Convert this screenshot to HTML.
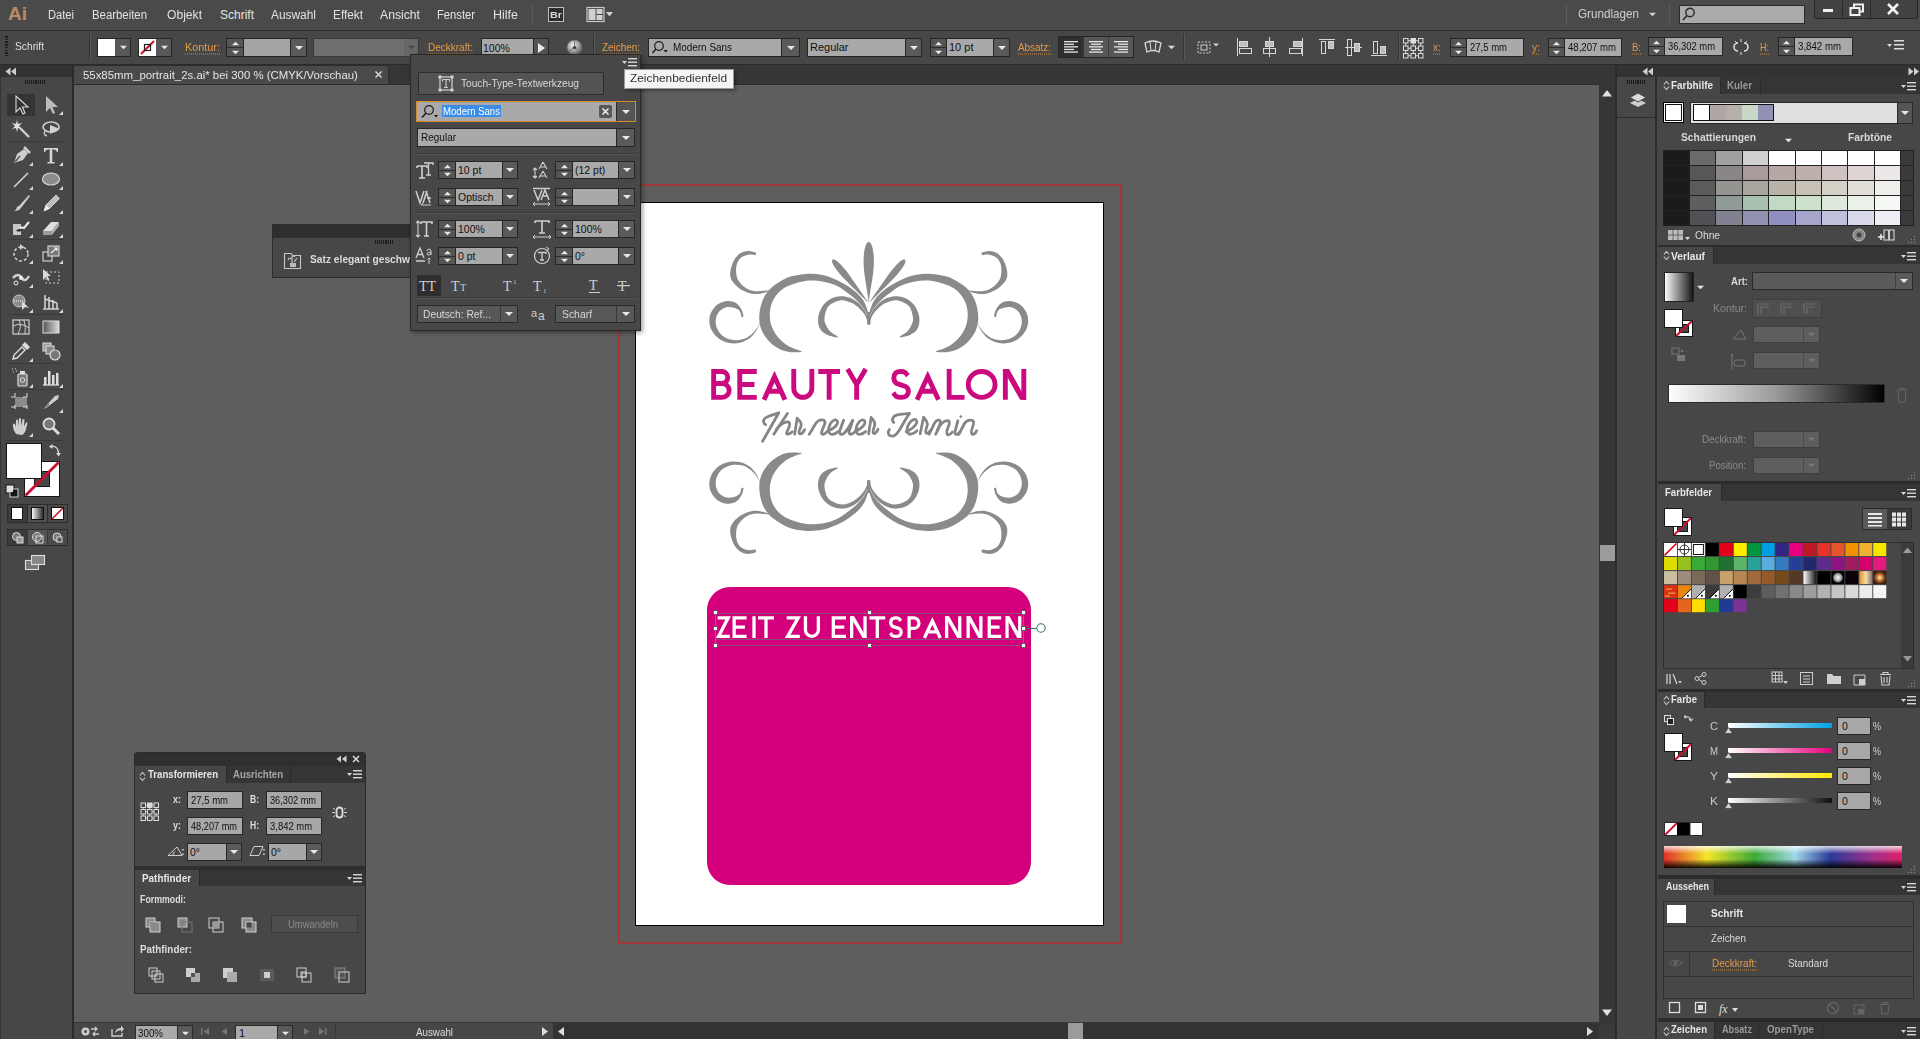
<!DOCTYPE html><html><head><meta charset="utf-8"><title>Illustrator</title><style>
*{margin:0;padding:0;box-sizing:border-box}
html,body{width:1920px;height:1039px;overflow:hidden;background:#484848;font-family:"Liberation Sans",sans-serif;color:#d8d8d8}
.a{position:absolute;display:block}
.t{position:absolute;white-space:nowrap}
</style></head><body><div class="a" style="left:0px;top:0px;width:1920px;height:30px;background:#4a4a4a;"></div><div class="a" style="left:0px;top:30px;width:1920px;height:1px;background:#2b2b2b;"></div><div class="a" style="left:0px;top:31px;width:1920px;height:33px;background:#474747;"></div><div class="a" style="left:0px;top:64px;width:1920px;height:1px;background:#2b2b2b;"></div><div class="a" style="left:0px;top:65px;width:72px;height:12px;background:#333333;"></div><div class="a" style="left:0px;top:77px;width:72px;height:962px;background:#474747;"></div><div class="a" style="left:0px;top:77px;width:1px;height:962px;background:#353535;"></div><div class="a" style="left:72px;top:65px;width:2px;height:974px;background:#2b2b2b;"></div><div class="a" style="left:74px;top:65px;width:1525px;height:20px;background:#363636;"></div><div class="a" style="left:74px;top:85px;width:1525px;height:937px;background:#5e5e5e;"></div><div class="a" style="left:74px;top:1022px;width:1525px;height:17px;background:#474747;"></div><div class="a" style="left:1599px;top:65px;width:16px;height:974px;background:#363636;"></div><div class="a" style="left:1615px;top:65px;width:2px;height:974px;background:#2b2b2b;"></div><div class="a" style="left:1617px;top:65px;width:38px;height:12px;background:#333333;"></div><div class="a" style="left:1617px;top:77px;width:38px;height:962px;background:#474747;"></div><div class="a" style="left:1655px;top:77px;width:2px;height:962px;background:#2b2b2b;"></div><div class="a" style="left:1655px;top:65px;width:2px;height:12px;background:#333333;"></div><div class="a" style="left:1657px;top:65px;width:263px;height:12px;background:#333333;"></div><div class="a" style="left:1657px;top:77px;width:263px;height:962px;background:#474747;"></div><div class="t" style="left:8.0px;top:3.92px;font-size:19px;line-height:19px;color:#c08a60;font-weight:bold;transform:scaleX(1.000);transform-origin:0 0;">Ai</div><div class="t" style="left:48.0px;top:8.84px;font-size:12px;line-height:12px;color:#e2e2e2;transform:scaleX(0.928);transform-origin:0 0;">Datei</div><div class="t" style="left:92.0px;top:8.84px;font-size:12px;line-height:12px;color:#e2e2e2;transform:scaleX(0.948);transform-origin:0 0;">Bearbeiten</div><div class="t" style="left:167.0px;top:8.84px;font-size:12px;line-height:12px;color:#e2e2e2;transform:scaleX(1.009);transform-origin:0 0;">Objekt</div><div class="t" style="left:220.0px;top:8.84px;font-size:12px;line-height:12px;color:#e2e2e2;transform:scaleX(1.000);transform-origin:0 0;">Schrift</div><div class="t" style="left:271.0px;top:8.84px;font-size:12px;line-height:12px;color:#e2e2e2;transform:scaleX(0.992);transform-origin:0 0;">Auswahl</div><div class="t" style="left:333.0px;top:8.84px;font-size:12px;line-height:12px;color:#e2e2e2;transform:scaleX(0.985);transform-origin:0 0;">Effekt</div><div class="t" style="left:380.0px;top:8.84px;font-size:12px;line-height:12px;color:#e2e2e2;transform:scaleX(1.016);transform-origin:0 0;">Ansicht</div><div class="t" style="left:437.0px;top:8.84px;font-size:12px;line-height:12px;color:#e2e2e2;transform:scaleX(0.934);transform-origin:0 0;">Fenster</div><div class="t" style="left:493.0px;top:8.84px;font-size:12px;line-height:12px;color:#e2e2e2;transform:scaleX(1.041);transform-origin:0 0;">Hilfe</div><div class="a" style="left:532px;top:5px;width:1px;height:20px;background:#5a5a5a;"></div><div class="a" style="left:548px;top:7px;width:16px;height:15px;background:#2e2e2e;border:1px solid #bdbdbd"></div><div class="t" style="left:550.0px;top:10.46px;font-size:9.5px;line-height:9.5px;color:#d8d8d8;font-weight:bold;transform:scaleX(1.137);transform-origin:0 0;">Br</div><svg class="a" style="left:586px;top:6px;" width="28" height="17" viewBox="0 0 28 17"><rect x="1" y="1.5" width="17" height="14" fill="none" stroke="#c8c8c8" stroke-width="1.2"/><rect x="2.5" y="3" width="7" height="11" fill="#d0d0d0"/><rect x="10.5" y="3" width="6" height="5" fill="#d0d0d0"/><rect x="10.5" y="9" width="6" height="5" fill="#d0d0d0"/><path d="M20 6 L27 6 L23.5 10.5 Z" fill="#d0d0d0"/></svg><div class="a" style="left:1566px;top:4px;width:1px;height:22px;background:#5a5a5a;"></div><div class="t" style="left:1578.0px;top:7.84px;font-size:12px;line-height:12px;color:#cfcfcf;transform:scaleX(0.973);transform-origin:0 0;">Grundlagen</div><svg class="a" style="left:1648.5px;top:10.5px;" width="7.0" height="7.0" viewBox="0 0 7.0 7.0"><path d="M0 1.75 L7.0 1.75 L3.5 5.25 Z" fill="#d0d0d0"/></svg><div class="a" style="left:1669px;top:4px;width:1px;height:22px;background:#5a5a5a;"></div><div class="a" style="left:1679px;top:5px;width:126px;height:19px;background:#aaaaaa;border:1px solid #2a2a2a"></div><svg class="a" style="left:1681px;top:6px;" width="16" height="16" viewBox="0 0 16 16"><circle cx="9" cy="6.5" r="4.2" fill="none" stroke="#2a2a2a" stroke-width="1.4"/><path d="M6 9.5 L2 14" stroke="#2a2a2a" stroke-width="1.6"/></svg><div class="a" style="left:1814px;top:0px;width:104px;height:19px;background:#424242;border:1px solid #262626;border-top:none;border-radius:0 0 3px 3px"></div><div class="a" style="left:1842px;top:1px;width:1px;height:17px;background:#2a2a2a;"></div><div class="a" style="left:1870px;top:1px;width:1px;height:17px;background:#2a2a2a;"></div><div class="a" style="left:1823px;top:9px;width:10px;height:3px;background:#f0f0f0;"></div><svg class="a" style="left:1849px;top:3px;" width="16" height="14" viewBox="0 0 16 14"><rect x="5" y="1.5" width="9" height="7" fill="none" stroke="#f0f0f0" stroke-width="2"/><rect x="1.5" y="5" width="9" height="7" fill="#424242" stroke="#f0f0f0" stroke-width="2"/></svg><svg class="a" style="left:1886px;top:2px;" width="14" height="14" viewBox="0 0 14 14"><path d="M2 2 L12 12 M12 2 L2 12" stroke="#f4f4f4" stroke-width="2.6"/></svg><div class="a" style="left:5px;top:36.0px;width:3px;height:1.6px;background:#1e1e1e;"></div><div class="a" style="left:5px;top:38.7px;width:3px;height:1.6px;background:#1e1e1e;"></div><div class="a" style="left:5px;top:41.4px;width:3px;height:1.6px;background:#1e1e1e;"></div><div class="a" style="left:5px;top:44.1px;width:3px;height:1.6px;background:#1e1e1e;"></div><div class="a" style="left:5px;top:46.8px;width:3px;height:1.6px;background:#1e1e1e;"></div><div class="a" style="left:5px;top:49.5px;width:3px;height:1.6px;background:#1e1e1e;"></div><div class="a" style="left:5px;top:52.2px;width:3px;height:1.6px;background:#1e1e1e;"></div><div class="a" style="left:5px;top:54.900000000000006px;width:3px;height:1.6px;background:#1e1e1e;"></div><div class="t" style="left:15.0px;top:41.19px;font-size:11px;line-height:11px;color:#dedede;transform:scaleX(0.930);transform-origin:0 0;">Schrift</div><div class="a" style="left:89px;top:34px;width:1px;height:26px;background:#363636;"></div><div class="a" style="left:90px;top:34px;width:1px;height:26px;background:#585858;"></div><div class="a" style="left:97px;top:38px;width:34px;height:19px;background:#585858;border:1px solid #262626"></div><div class="a" style="left:98px;top:39px;width:17px;height:17px;background:#ffffff;"></div><svg class="a" style="left:119.5px;top:44.0px;" width="7.0" height="7.0" viewBox="0 0 7.0 7.0"><path d="M0 1.75 L7.0 1.75 L3.5 5.25 Z" fill="#e8e8e8"/></svg><div class="a" style="left:138px;top:38px;width:34px;height:19px;background:#585858;border:1px solid #262626"></div><div class="a" style="left:139px;top:39px;width:17px;height:17px;background:#ffffff;"></div><svg class="a" style="left:139px;top:39px;" width="17" height="17" viewBox="0 0 17 17"><path d="M2 15 L15 2" stroke="#d4172a" stroke-width="2.2"/><rect x="5.5" y="5.5" width="6" height="6" fill="none" stroke="#222" stroke-width="1.2"/></svg><svg class="a" style="left:160.5px;top:44.0px;" width="7.0" height="7.0" viewBox="0 0 7.0 7.0"><path d="M0 1.75 L7.0 1.75 L3.5 5.25 Z" fill="#e8e8e8"/></svg><div class="t" style="left:185.0px;top:41.69px;font-size:11px;line-height:11px;color:#e49a4a;transform:scaleX(0.987);transform-origin:0 0;">Kontur:</div><svg class="a" style="left:185px;top:53px;" width="36" height="2" viewBox="0 0 36 2"><line x1="0" y1="1" x2="36" y2="1" stroke="#d0883a" stroke-width="1" stroke-dasharray="1 1"/></svg><div class="a" style="left:226px;top:38px;width:18px;height:19px;background:#555;border:1px solid #262626"></div><div class="a" style="left:227px;top:47px;width:16px;height:1px;background:#2e2e2e;"></div><svg class="a" style="left:231.5px;top:40.25px;" width="7.0" height="7.0" viewBox="0 0 7.0 7.0"><path d="M0 5.25 L7.0 5.25 L3.5 1.75 Z" fill="#e8e8e8"/></svg><svg class="a" style="left:231.5px;top:48.75px;" width="7.0" height="7.0" viewBox="0 0 7.0 7.0"><path d="M0 1.75 L7.0 1.75 L3.5 5.25 Z" fill="#e8e8e8"/></svg><div class="a" style="left:243px;top:38px;width:48px;height:19px;background:#a4a4a4;border:1px solid #262626"></div><div class="a" style="left:290px;top:38px;width:17px;height:19px;background:#5a5a5a;border:1px solid #262626"></div><svg class="a" style="left:294.5px;top:43.5px;" width="8" height="8" viewBox="0 0 8 8"><path d="M0 2.0 L8 2.0 L4 6.0 Z" fill="#e8e8e8"/></svg><div class="a" style="left:313px;top:38px;width:106px;height:19px;background:#6e6e6e;border:1px solid #3a3a3a"></div><div class="a" style="left:404px;top:39px;width:14px;height:17px;background:#676767;"></div><svg class="a" style="left:407.5px;top:44.0px;" width="7.0" height="7.0" viewBox="0 0 7.0 7.0"><path d="M0 1.75 L7.0 1.75 L3.5 5.25 Z" fill="#4a4a4a"/></svg><div class="t" style="left:428.0px;top:41.69px;font-size:11px;line-height:11px;color:#e49a4a;transform:scaleX(0.909);transform-origin:0 0;">Deckkraft:</div><svg class="a" style="left:428px;top:53px;" width="46" height="2" viewBox="0 0 46 2"><line x1="0" y1="1" x2="46" y2="1" stroke="#d0883a" stroke-width="1" stroke-dasharray="1 1"/></svg><div class="a" style="left:481px;top:38px;width:53px;height:19px;background:#a9a9a9;border:1px solid #262626"></div><div class="t" style="left:483.0px;top:42.50px;font-size:10.5px;line-height:10.5px;color:#111;">100%</div><div class="a" style="left:533px;top:38px;width:16px;height:19px;background:#555;border:1px solid #262626"></div><svg class="a" style="left:537px;top:43px;" width="9" height="10" viewBox="0 0 9 10"><path d="M1 0 L8 5 L1 10 Z" fill="#e8e8e8"/></svg><svg class="a" style="left:566px;top:39px;" width="17" height="17" viewBox="0 0 17 17"><defs><radialGradient id="gl" cx="0.4" cy="0.35" r="0.7"><stop offset="0" stop-color="#f0f0f0"/><stop offset="0.6" stop-color="#9a9a9a"/><stop offset="1" stop-color="#555"/></radialGradient></defs><circle cx="8.5" cy="8.5" r="7.5" fill="url(#gl)" stroke="#666" stroke-width="0.8"/><path d="M8.5 8.5 L8.5 1.5 M8.5 8.5 L14.5 12 M8.5 8.5 L2.5 12" stroke="#777" stroke-width="0.9"/><circle cx="8.5" cy="8.5" r="1.6" fill="#333"/></svg><div class="a" style="left:593px;top:34px;width:1px;height:26px;background:#363636;"></div><div class="a" style="left:594px;top:34px;width:1px;height:26px;background:#585858;"></div><div class="t" style="left:602.0px;top:41.69px;font-size:11px;line-height:11px;color:#e49a4a;transform:scaleX(0.901);transform-origin:0 0;">Zeichen:</div><svg class="a" style="left:602px;top:53px;" width="39" height="2" viewBox="0 0 39 2"><line x1="0" y1="1" x2="39" y2="1" stroke="#d0883a" stroke-width="1" stroke-dasharray="1 1"/></svg><div class="a" style="left:648px;top:38px;width:134px;height:19px;background:#a9a9a9;border:1px solid #262626"></div><svg class="a" style="left:651px;top:40px;" width="20" height="15" viewBox="0 0 20 15"><circle cx="8" cy="6" r="4.3" fill="none" stroke="#1a1a1a" stroke-width="1.2"/><path d="M5 9 L1.5 13" stroke="#1a1a1a" stroke-width="1.4"/><path d="M12.5 10 L17 10 L14.75 12.5 Z" fill="#1a1a1a"/></svg><div class="t" style="left:673.0px;top:41.69px;font-size:11px;line-height:11px;color:#111;transform:scaleX(0.902);transform-origin:0 0;">Modern Sans</div><div class="a" style="left:781px;top:38px;width:19px;height:19px;background:#5a5a5a;border:1px solid #262626"></div><svg class="a" style="left:786.5px;top:43.5px;" width="8" height="8" viewBox="0 0 8 8"><path d="M0 2.0 L8 2.0 L4 6.0 Z" fill="#e8e8e8"/></svg><div class="a" style="left:807px;top:38px;width:99px;height:19px;background:#a9a9a9;border:1px solid #262626"></div><div class="t" style="left:810.0px;top:42.26px;font-size:11px;line-height:11px;color:#111;">Regular</div><div class="a" style="left:905px;top:38px;width:17px;height:19px;background:#5a5a5a;border:1px solid #262626"></div><svg class="a" style="left:909.5px;top:43.5px;" width="8" height="8" viewBox="0 0 8 8"><path d="M0 2.0 L8 2.0 L4 6.0 Z" fill="#e8e8e8"/></svg><div class="a" style="left:930px;top:38px;width:17px;height:19px;background:#555;border:1px solid #262626"></div><div class="a" style="left:931px;top:47px;width:15px;height:1px;background:#2e2e2e;"></div><svg class="a" style="left:935.0px;top:40.25px;" width="7.0" height="7.0" viewBox="0 0 7.0 7.0"><path d="M0 5.25 L7.0 5.25 L3.5 1.75 Z" fill="#e8e8e8"/></svg><svg class="a" style="left:935.0px;top:48.75px;" width="7.0" height="7.0" viewBox="0 0 7.0 7.0"><path d="M0 1.75 L7.0 1.75 L3.5 5.25 Z" fill="#e8e8e8"/></svg><div class="a" style="left:946px;top:38px;width:48px;height:19px;background:#a9a9a9;border:1px solid #262626"></div><div class="t" style="left:949.0px;top:42.26px;font-size:11px;line-height:11px;color:#111;">10 pt</div><div class="a" style="left:993px;top:38px;width:17px;height:19px;background:#5a5a5a;border:1px solid #262626"></div><svg class="a" style="left:997.5px;top:43.5px;" width="8" height="8" viewBox="0 0 8 8"><path d="M0 2.0 L8 2.0 L4 6.0 Z" fill="#e8e8e8"/></svg><div class="t" style="left:1018.0px;top:41.69px;font-size:11px;line-height:11px;color:#e49a4a;transform:scaleX(0.900);transform-origin:0 0;">Absatz:</div><svg class="a" style="left:1018px;top:53px;" width="34" height="2" viewBox="0 0 34 2"><line x1="0" y1="1" x2="34" y2="1" stroke="#d0883a" stroke-width="1" stroke-dasharray="1 1"/></svg><div class="a" style="left:1058px;top:36px;width:76px;height:22px;background:#3a3a3a;border:1px solid #262626"></div><div class="a" style="left:1059px;top:37px;width:24px;height:20px;background:#2f2f2f;"></div><div class="a" style="left:1084px;top:37px;width:24px;height:20px;background:#575757;"></div><div class="a" style="left:1109px;top:37px;width:24px;height:20px;background:#575757;"></div><svg class="a" style="left:1064px;top:41px;" width="14" height="14" viewBox="0 0 14 14"><rect x="0" y="0.0" width="14" height="1.3" fill="#e6e6e6"/><rect x="0" y="2.6" width="10" height="1.3" fill="#e6e6e6"/><rect x="0" y="5.2" width="14" height="1.3" fill="#e6e6e6"/><rect x="0" y="7.800000000000001" width="10" height="1.3" fill="#e6e6e6"/><rect x="0" y="10.4" width="14" height="1.3" fill="#e6e6e6"/></svg><svg class="a" style="left:1089px;top:41px;" width="14" height="14" viewBox="0 0 14 14"><rect x="0.0" y="0.0" width="14" height="1.3" fill="#e6e6e6"/><rect x="2.0" y="2.6" width="10" height="1.3" fill="#e6e6e6"/><rect x="0.0" y="5.2" width="14" height="1.3" fill="#e6e6e6"/><rect x="2.0" y="7.800000000000001" width="10" height="1.3" fill="#e6e6e6"/><rect x="0.0" y="10.4" width="14" height="1.3" fill="#e6e6e6"/></svg><svg class="a" style="left:1114px;top:41px;" width="14" height="14" viewBox="0 0 14 14"><rect x="0" y="0.0" width="14" height="1.3" fill="#e6e6e6"/><rect x="4" y="2.6" width="10" height="1.3" fill="#e6e6e6"/><rect x="0" y="5.2" width="14" height="1.3" fill="#e6e6e6"/><rect x="4" y="7.800000000000001" width="10" height="1.3" fill="#e6e6e6"/><rect x="0" y="10.4" width="14" height="1.3" fill="#e6e6e6"/></svg><svg class="a" style="left:1144px;top:40px;" width="18" height="14" viewBox="0 0 18 14"><path d="M1 3 Q9 -1 17 3 L15 12 Q9 9 3 12 Z" fill="none" stroke="#d8d8d8" stroke-width="1.3"/><path d="M6 2 L7 11 M12 2 L11 11" stroke="#d8d8d8" stroke-width="1"/></svg><svg class="a" style="left:1167.5px;top:43.5px;" width="7.0" height="7.0" viewBox="0 0 7.0 7.0"><path d="M0 1.75 L7.0 1.75 L3.5 5.25 Z" fill="#d8d8d8"/></svg><div class="a" style="left:1183px;top:34px;width:1px;height:26px;background:#363636;"></div><div class="a" style="left:1184px;top:34px;width:1px;height:26px;background:#585858;"></div><svg class="a" style="left:1195px;top:39px;" width="20" height="17" viewBox="0 0 20 17"><rect x="3" y="3" width="12" height="11" fill="none" stroke="#cfcfcf" stroke-dasharray="2 1.5"/><rect x="6" y="6" width="6" height="5" fill="none" stroke="#cfcfcf"/></svg><svg class="a" style="left:1213px;top:42px;" width="6" height="6" viewBox="0 0 6 6"><path d="M0 1.5 L6 1.5 L3 4.5 Z" fill="#d0d0d0"/></svg><svg class="a" style="left:1230px;top:34px;" width="160" height="26" viewBox="0 0 160 26"><g transform="translate(-1230 -34)" stroke="#d6d6d6" stroke-width="1" fill="none">
<path d="M1237.5 38 V56"/><rect x="1239.5" y="41.5" width="8" height="5" fill="#bdbdbd"/><rect x="1239.5" y="48.5" width="12" height="5"/>
<path d="M1269.5 37 V57"/><rect x="1265.5" y="41.5" width="8" height="5" fill="#bdbdbd"/><rect x="1263.5" y="48.5" width="12" height="5"/>
<path d="M1302.5 38 V56"/><rect x="1293.5" y="41.5" width="8" height="5" fill="#bdbdbd"/><rect x="1289.5" y="48.5" width="12" height="5"/>
<path d="M1319 39.5 H1335"/><rect x="1321.5" y="41.5" width="4" height="12"/><rect x="1328.5" y="41.5" width="5" height="7" fill="#bdbdbd"/>
<path d="M1345 47.5 H1362"/><rect x="1347.5" y="39.5" width="4" height="16"/><rect x="1354.5" y="43.5" width="5" height="8" fill="#bdbdbd"/>
<path d="M1371 55.5 H1387"/><rect x="1373.5" y="41.5" width="4" height="12"/><rect x="1380.5" y="46.5" width="5" height="7" fill="#bdbdbd"/>
</g></svg><div class="a" style="left:1398px;top:34px;width:1px;height:26px;background:#363636;"></div><div class="a" style="left:1399px;top:34px;width:1px;height:26px;background:#585858;"></div><svg class="a" style="left:1402px;top:37px;" width="22" height="22" viewBox="0 0 22 22"><rect x="1.5" y="1.5" width="4.5" height="4.5" fill="none" stroke="#dcdcdc" stroke-width="1"/><rect x="9.0" y="1.5" width="4.5" height="4.5" fill="#dcdcdc" stroke="#dcdcdc" stroke-width="1"/><rect x="16.5" y="1.5" width="4.5" height="4.5" fill="none" stroke="#dcdcdc" stroke-width="1"/><rect x="1.5" y="9.0" width="4.5" height="4.5" fill="none" stroke="#dcdcdc" stroke-width="1"/><rect x="9.0" y="9.0" width="4.5" height="4.5" fill="none" stroke="#dcdcdc" stroke-width="1"/><rect x="16.5" y="9.0" width="4.5" height="4.5" fill="none" stroke="#dcdcdc" stroke-width="1"/><rect x="1.5" y="16.5" width="4.5" height="4.5" fill="none" stroke="#dcdcdc" stroke-width="1"/><rect x="9.0" y="16.5" width="4.5" height="4.5" fill="none" stroke="#dcdcdc" stroke-width="1"/><rect x="16.5" y="16.5" width="4.5" height="4.5" fill="none" stroke="#dcdcdc" stroke-width="1"/><path d="M6 3.75 H9 M13.5 3.75 H16.5 M3.75 6 V9 M3.75 13.5 V16.5" stroke="#dcdcdc" stroke-width="1"/><path d="M6 11.25 H9 M13.5 11.25 H16.5 M11.25 6 V9 M11.25 13.5 V16.5" stroke="#dcdcdc" stroke-width="1"/><path d="M6 18.75 H9 M13.5 18.75 H16.5 M18.75 6 V9 M18.75 13.5 V16.5" stroke="#dcdcdc" stroke-width="1"/></svg><div class="t" style="left:1433.0px;top:41.69px;font-size:11px;line-height:11px;color:#e49a4a;transform:scaleX(0.935);transform-origin:0 0;">x:</div><svg class="a" style="left:1433px;top:53px;" width="8" height="2" viewBox="0 0 8 2"><line x1="0" y1="1" x2="8" y2="1" stroke="#d0883a" stroke-width="1" stroke-dasharray="1 1"/></svg><div class="a" style="left:1450px;top:38px;width:17px;height:19px;background:#555;border:1px solid #262626"></div><div class="a" style="left:1451px;top:47px;width:15px;height:1px;background:#2e2e2e;"></div><svg class="a" style="left:1455.0px;top:40.25px;" width="7.0" height="7.0" viewBox="0 0 7.0 7.0"><path d="M0 5.25 L7.0 5.25 L3.5 1.75 Z" fill="#e8e8e8"/></svg><svg class="a" style="left:1455.0px;top:48.75px;" width="7.0" height="7.0" viewBox="0 0 7.0 7.0"><path d="M0 1.75 L7.0 1.75 L3.5 5.25 Z" fill="#e8e8e8"/></svg><div class="a" style="left:1466px;top:38px;width:58px;height:19px;background:#a9a9a9;border:1px solid #262626"></div><div class="t" style="left:1470.0px;top:42.26px;font-size:11px;line-height:11px;color:#111;transform:scaleX(0.865);transform-origin:0 0;">27,5 mm</div><div class="t" style="left:1532.0px;top:41.69px;font-size:11px;line-height:11px;color:#e49a4a;transform:scaleX(0.935);transform-origin:0 0;">y:</div><svg class="a" style="left:1532px;top:53px;" width="8" height="2" viewBox="0 0 8 2"><line x1="0" y1="1" x2="8" y2="1" stroke="#d0883a" stroke-width="1" stroke-dasharray="1 1"/></svg><div class="a" style="left:1548px;top:38px;width:17px;height:19px;background:#555;border:1px solid #262626"></div><div class="a" style="left:1549px;top:47px;width:15px;height:1px;background:#2e2e2e;"></div><svg class="a" style="left:1553.0px;top:40.25px;" width="7.0" height="7.0" viewBox="0 0 7.0 7.0"><path d="M0 5.25 L7.0 5.25 L3.5 1.75 Z" fill="#e8e8e8"/></svg><svg class="a" style="left:1553.0px;top:48.75px;" width="7.0" height="7.0" viewBox="0 0 7.0 7.0"><path d="M0 1.75 L7.0 1.75 L3.5 5.25 Z" fill="#e8e8e8"/></svg><div class="a" style="left:1564px;top:38px;width:58px;height:19px;background:#a9a9a9;border:1px solid #262626"></div><div class="t" style="left:1568.0px;top:42.26px;font-size:11px;line-height:11px;color:#111;transform:scaleX(0.872);transform-origin:0 0;">48,207 mm</div><div class="t" style="left:1632.0px;top:41.69px;font-size:11px;line-height:11px;color:#e49a4a;transform:scaleX(0.866);transform-origin:0 0;">B:</div><svg class="a" style="left:1632px;top:53px;" width="9" height="2" viewBox="0 0 9 2"><line x1="0" y1="1" x2="9" y2="1" stroke="#d0883a" stroke-width="1" stroke-dasharray="1 1"/></svg><div class="a" style="left:1648px;top:37px;width:17px;height:19px;background:#555;border:1px solid #262626"></div><div class="a" style="left:1649px;top:46px;width:15px;height:1px;background:#2e2e2e;"></div><svg class="a" style="left:1653.0px;top:39.25px;" width="7.0" height="7.0" viewBox="0 0 7.0 7.0"><path d="M0 5.25 L7.0 5.25 L3.5 1.75 Z" fill="#e8e8e8"/></svg><svg class="a" style="left:1653.0px;top:47.75px;" width="7.0" height="7.0" viewBox="0 0 7.0 7.0"><path d="M0 1.75 L7.0 1.75 L3.5 5.25 Z" fill="#e8e8e8"/></svg><div class="a" style="left:1664px;top:37px;width:59px;height:19px;background:#a9a9a9;border:1px solid #262626"></div><div class="t" style="left:1668.0px;top:41.26px;font-size:11px;line-height:11px;color:#111;transform:scaleX(0.854);transform-origin:0 0;">36,302 mm</div><svg class="a" style="left:1732px;top:39px;" width="18" height="16" viewBox="0 0 18 16"><path d="M6 4 A4 4 0 0 0 6 12 M12 4 A4 4 0 0 1 12 12" fill="none" stroke="#ddd" stroke-width="1.6"/><path d="M9 0 L9 3 M9 13 L9 16 M3 2 L5 4 M15 2 L13 4" stroke="#ddd" stroke-width="1"/></svg><div class="t" style="left:1760.0px;top:41.69px;font-size:11px;line-height:11px;color:#e49a4a;transform:scaleX(0.818);transform-origin:0 0;">H:</div><svg class="a" style="left:1760px;top:53px;" width="9" height="2" viewBox="0 0 9 2"><line x1="0" y1="1" x2="9" y2="1" stroke="#d0883a" stroke-width="1" stroke-dasharray="1 1"/></svg><div class="a" style="left:1778px;top:37px;width:17px;height:19px;background:#555;border:1px solid #262626"></div><div class="a" style="left:1779px;top:46px;width:15px;height:1px;background:#2e2e2e;"></div><svg class="a" style="left:1783.0px;top:39.25px;" width="7.0" height="7.0" viewBox="0 0 7.0 7.0"><path d="M0 5.25 L7.0 5.25 L3.5 1.75 Z" fill="#e8e8e8"/></svg><svg class="a" style="left:1783.0px;top:47.75px;" width="7.0" height="7.0" viewBox="0 0 7.0 7.0"><path d="M0 1.75 L7.0 1.75 L3.5 5.25 Z" fill="#e8e8e8"/></svg><div class="a" style="left:1794px;top:37px;width:59px;height:19px;background:#a9a9a9;border:1px solid #262626"></div><div class="t" style="left:1798.0px;top:41.26px;font-size:11px;line-height:11px;color:#111;transform:scaleX(0.879);transform-origin:0 0;">3,842 mm</div><svg class="a" style="left:1887px;top:39px;" width="18" height="14" viewBox="0 0 18 14"><path d="M0 5 L5 5 L2.5 8 Z" fill="#ddd"/><rect x="7" y="1" width="10" height="1.5" fill="#ddd"/><rect x="7" y="5" width="10" height="1.5" fill="#ddd"/><rect x="7" y="9" width="10" height="1.5" fill="#ddd"/></svg><div class="a" style="left:74px;top:65px;width:314px;height:19px;background:#4a4a4a;border-top:1px solid #2e2e2e"></div><div class="a" style="left:388px;top:65px;width:1px;height:19px;background:#2f2f2f;"></div><div class="a" style="left:74px;top:84px;width:1525px;height:1px;background:#2c2c2c;"></div><div class="t" style="left:83.0px;top:69.77px;font-size:11.5px;line-height:11.5px;color:#e4e4e4;transform:scaleX(0.991);transform-origin:0 0;">55x85mm_portrait_2s.ai* bei 300 % (CMYK/Vorschau)</div><svg class="a" style="left:374px;top:70px;" width="9" height="9" viewBox="0 0 9 9"><path d="M1.5 1.5 L7.5 7.5 M7.5 1.5 L1.5 7.5" stroke="#d8d8d8" stroke-width="1.5"/></svg><div class="a" style="left:74px;top:1023px;width:1525px;height:16px;background:#474747;"></div><div class="a" style="left:74px;top:1022px;width:1525px;height:1px;background:#383838;"></div><svg class="a" style="left:80px;top:1025px;" width="21" height="13" viewBox="0 0 21 13"><circle cx="5.5" cy="6.5" r="4" fill="#ccc"/><circle cx="5.5" cy="6.5" r="1.5" fill="#474747"/><path d="M11 4 L17 4 M15 2 L17 4 L15 6 M19 9 L13 9 M15 7 L13 9 L15 11" stroke="#ccc" stroke-width="1.3" fill="none"/></svg><svg class="a" style="left:110px;top:1024px;" width="15" height="14" viewBox="0 0 15 14"><path d="M2 5 L2 12 L12 12 L12 9" fill="none" stroke="#ccc" stroke-width="1.4"/><path d="M5 9 Q6 4 11 4 L11 1.5 L14 5 L11 8.5 L11 6 Q8 6 5 9Z" fill="#ccc"/></svg><div class="a" style="left:135px;top:1025px;width:43px;height:14px;background:#a9a9a9;border:1px solid #2a2a2a;border-bottom:none"></div><div class="t" style="left:138.0px;top:1028.19px;font-size:11px;line-height:11px;color:#111;transform:scaleX(0.889);transform-origin:0 0;">300%</div><div class="a" style="left:177px;top:1025px;width:16px;height:14px;background:#5a5a5a;border:1px solid #2a2a2a;border-bottom:none"></div><svg class="a" style="left:181.5px;top:1029.5px;" width="7.0" height="7.0" viewBox="0 0 7.0 7.0"><path d="M0 1.75 L7.0 1.75 L3.5 5.25 Z" fill="#e8e8e8"/></svg><svg class="a" style="left:200px;top:1026px;" width="11" height="11" viewBox="0 0 11 11"><rect x="1" y="2" width="1.5" height="7" fill="#777"/><path d="M9 2 L3.5 5.5 L9 9Z" fill="#777"/></svg><svg class="a" style="left:219px;top:1026px;" width="10" height="11" viewBox="0 0 10 11"><path d="M8 2 L2.5 5.5 L8 9Z" fill="#777"/></svg><div class="a" style="left:235px;top:1025px;width:43px;height:14px;background:#a9a9a9;border:1px solid #2a2a2a;border-bottom:none"></div><div class="t" style="left:239.0px;top:1028.19px;font-size:11px;line-height:11px;color:#111;">1</div><div class="a" style="left:277px;top:1025px;width:16px;height:14px;background:#5a5a5a;border:1px solid #2a2a2a;border-bottom:none"></div><svg class="a" style="left:281.5px;top:1029.5px;" width="7.0" height="7.0" viewBox="0 0 7.0 7.0"><path d="M0 1.75 L7.0 1.75 L3.5 5.25 Z" fill="#e8e8e8"/></svg><svg class="a" style="left:302px;top:1026px;" width="10" height="11" viewBox="0 0 10 11"><path d="M2 2 L7.5 5.5 L2 9Z" fill="#777"/></svg><svg class="a" style="left:317px;top:1026px;" width="11" height="11" viewBox="0 0 11 11"><path d="M2 2 L7.5 5.5 L2 9Z" fill="#777"/><rect x="8" y="2" width="1.5" height="7" fill="#777"/></svg><div class="a" style="left:335px;top:1024px;width:1px;height:15px;background:#3a3a3a;"></div><div class="t" style="left:416.0px;top:1026.69px;font-size:11px;line-height:11px;color:#dedede;transform:scaleX(0.890);transform-origin:0 0;">Auswahl</div><svg class="a" style="left:540px;top:1026px;" width="9" height="11" viewBox="0 0 9 11"><path d="M2 1 L8 5.5 L2 10Z" fill="#ddd"/></svg><div class="a" style="left:553px;top:1023px;width:1046px;height:16px;background:#333333;"></div><svg class="a" style="left:557px;top:1026px;" width="9" height="11" viewBox="0 0 9 11"><path d="M7 1 L1 5.5 L7 10Z" fill="#ddd"/></svg><div class="a" style="left:1068px;top:1023px;width:15px;height:16px;background:#9b9b9b;"></div><svg class="a" style="left:1585px;top:1026px;" width="9" height="11" viewBox="0 0 9 11"><path d="M2 1 L8 5.5 L2 10Z" fill="#ddd"/></svg><div class="a" style="left:1599px;top:1023px;width:16px;height:16px;background:#3a3a3a;"></div><svg class="a" style="left:1601px;top:88px;" width="12" height="10" viewBox="0 0 12 10"><path d="M1 8.5 L11 8.5 L6 2Z" fill="#e0e0e0"/></svg><div class="a" style="left:1600px;top:545px;width:15px;height:16px;background:#9b9b9b;"></div><svg class="a" style="left:1601px;top:1008px;" width="12" height="10" viewBox="0 0 12 10"><path d="M1 1.5 L11 1.5 L6 8Z" fill="#e0e0e0"/></svg><div class="a" style="left:618px;top:184px;width:504px;height:760px;background:transparent;border:2px solid #a33636"></div><div class="a" style="left:635px;top:202px;width:469px;height:724px;background:#fff;border:1px solid #000"></div><div class="a" style="left:707px;top:587px;width:324px;height:298px;background:#d4007b;border-radius:23px"></div><svg class="a" style="left:0;top:0" width="1920" height="1039" viewBox="0 0 1920 1039"><g fill="#8a8a8a"><g><path d="M756.00 252.60 C754.68 252.32 750.67 250.82 748.10 250.90 C745.53 250.98 742.93 251.57 740.60 253.10 C738.27 254.63 735.82 256.97 734.10 260.10 C732.38 263.23 730.67 268.48 730.30 271.90 C729.93 275.32 730.18 277.72 731.90 280.60 C733.62 283.48 737.00 286.97 740.60 289.20 C744.20 291.43 749.38 293.47 753.50 294.00 C757.62 294.53 762.43 293.20 765.30 292.40 C768.17 291.60 769.80 289.73 770.70 289.20 L769.70 290.20 C767.35 290.38 759.57 291.65 755.60 291.30 C751.63 290.95 748.77 289.88 745.90 288.10 C743.03 286.32 740.02 283.12 738.40 280.60 C736.78 278.08 736.47 275.70 736.20 273.00 C735.93 270.30 736.07 266.92 736.80 264.40 C737.53 261.88 738.72 259.52 740.60 257.90 C742.48 256.28 745.60 255.15 748.10 254.70 C750.60 254.25 754.35 255.12 755.60 255.20 Z"/><path d="M743.60 316.50 C743.27 315.37 742.82 311.92 741.60 309.70 C740.38 307.48 738.63 304.65 736.30 303.20 C733.97 301.75 730.67 300.82 727.60 301.00 C724.53 301.18 720.58 302.50 717.90 304.30 C715.22 306.10 712.93 309.12 711.50 311.80 C710.07 314.48 709.30 317.35 709.30 320.40 C709.30 323.45 709.88 327.03 711.50 330.10 C713.12 333.17 715.95 336.63 719.00 338.80 C722.05 340.97 726.20 342.48 729.80 343.10 C733.40 343.72 737.18 343.40 740.60 342.50 C744.02 341.60 747.62 339.77 750.30 337.70 C752.98 335.63 755.05 332.62 756.70 330.10 C758.35 327.58 759.62 323.85 760.20 322.60 L759.60 322.60 C759.30 323.32 759.18 324.93 757.80 326.90 C756.42 328.87 753.82 332.33 751.30 334.40 C748.78 336.47 745.93 338.40 742.70 339.30 C739.47 340.20 735.32 340.43 731.90 339.80 C728.48 339.17 724.70 337.47 722.20 335.50 C719.70 333.53 717.97 330.68 716.90 328.00 C715.83 325.32 715.45 322.10 715.80 319.40 C716.15 316.70 717.38 313.78 719.00 311.80 C720.62 309.82 723.17 308.22 725.50 307.50 C727.83 306.78 730.67 306.97 733.00 307.50 C735.33 308.03 738.08 309.08 739.50 310.70 C740.92 312.32 741.17 316.12 741.50 317.20 Z"/><path d="M868.60 314.00 C867.95 312.17 866.40 306.23 864.70 303.00 C863.00 299.77 861.22 297.42 858.40 294.60 C855.58 291.78 851.70 288.67 847.80 286.10 C843.90 283.53 839.23 281.05 835.00 279.20 C830.77 277.35 827.15 275.88 822.40 275.00 C817.65 274.12 811.80 273.63 806.50 273.90 C801.20 274.17 795.10 275.25 790.60 276.60 C786.10 277.95 782.98 279.90 779.50 282.00 C776.02 284.10 772.42 286.38 769.70 289.20 C766.98 292.02 764.82 295.48 763.20 298.90 C761.58 302.32 760.63 306.12 760.00 309.70 C759.37 313.28 759.05 316.82 759.40 320.40 C759.75 323.98 760.38 327.60 762.10 331.20 C763.82 334.80 766.65 338.95 769.70 342.00 C772.75 345.05 776.85 347.80 780.40 349.50 C783.95 351.20 787.48 351.78 791.00 352.20 C794.52 352.62 799.75 352.03 801.50 352.00 L801.50 351.30 C799.17 350.33 791.50 347.97 787.50 345.50 C783.50 343.03 780.15 339.75 777.50 336.50 C774.85 333.25 772.88 329.50 771.60 326.00 C770.32 322.50 769.87 319.00 769.80 315.50 C769.73 312.00 770.30 308.12 771.20 305.00 C772.10 301.88 773.43 299.33 775.20 296.80 C776.97 294.27 779.23 291.75 781.80 289.80 C784.37 287.85 786.48 286.60 790.60 285.10 C794.72 283.60 801.20 281.42 806.50 280.80 C811.80 280.18 817.65 280.68 822.40 281.40 C827.15 282.12 831.13 283.43 835.00 285.10 C838.87 286.77 842.07 288.93 845.60 291.40 C849.13 293.87 853.18 297.07 856.20 299.90 C859.22 302.73 861.83 305.80 863.70 308.40 C865.57 311.00 866.78 314.32 867.40 315.50 Z"/><path d="M868.20 319.00 C867.62 317.58 866.33 313.15 864.70 310.50 C863.07 307.85 860.87 305.22 858.40 303.10 C855.93 300.98 852.90 298.95 849.90 297.80 C846.90 296.65 843.58 296.03 840.40 296.20 C837.22 296.37 833.80 297.13 830.80 298.80 C827.80 300.47 824.52 303.02 822.40 306.20 C820.28 309.38 818.50 314.14 818.10 317.90 C817.70 321.66 818.43 325.90 820.00 328.75 C821.57 331.60 824.53 333.52 827.50 335.00 C830.47 336.48 836.08 337.17 837.80 337.60 L837.50 336.30 C836.25 335.46 831.98 333.30 830.00 331.25 C828.02 329.20 826.52 326.23 825.60 324.00 C824.68 321.77 824.17 320.68 824.50 317.90 C824.83 315.12 825.83 309.95 827.60 307.30 C829.37 304.65 832.45 303.15 835.10 302.00 C837.75 300.85 840.68 300.22 843.50 300.40 C846.32 300.58 849.35 301.77 852.00 303.10 C854.65 304.43 857.28 306.47 859.40 308.40 C861.52 310.33 863.33 312.52 864.70 314.70 C866.07 316.88 867.12 320.37 867.60 321.50 Z"/><path d="M867.2 312 L870.3 312 L870.3 324 Q868.75 325.6 867.2 324 Z"/><path d="M832.30 259.60 C832.29 260.08 831.83 261.19 832.25 262.51 C832.68 263.82 833.53 265.51 834.86 267.50 C836.20 269.49 838.11 271.95 840.28 274.44 C842.45 276.93 845.31 279.80 847.88 282.43 C850.45 285.06 853.23 287.76 855.71 290.23 C858.18 292.70 860.80 295.29 862.75 297.25 C864.70 299.20 866.63 301.18 867.41 301.96 L867.79 301.64 C867.16 300.74 865.56 298.49 863.98 296.22 C862.40 293.96 860.31 290.93 858.31 288.05 C856.32 285.17 854.16 281.96 852.02 278.97 C849.88 275.97 847.56 272.65 845.50 270.08 C843.43 267.50 841.34 265.19 839.62 263.52 C837.90 261.85 836.39 260.72 835.17 260.07 C833.95 259.42 832.78 259.68 832.30 259.60Z"/></g><g transform="translate(1737.5 0) scale(-1 1)"><path d="M756.00 252.60 C754.68 252.32 750.67 250.82 748.10 250.90 C745.53 250.98 742.93 251.57 740.60 253.10 C738.27 254.63 735.82 256.97 734.10 260.10 C732.38 263.23 730.67 268.48 730.30 271.90 C729.93 275.32 730.18 277.72 731.90 280.60 C733.62 283.48 737.00 286.97 740.60 289.20 C744.20 291.43 749.38 293.47 753.50 294.00 C757.62 294.53 762.43 293.20 765.30 292.40 C768.17 291.60 769.80 289.73 770.70 289.20 L769.70 290.20 C767.35 290.38 759.57 291.65 755.60 291.30 C751.63 290.95 748.77 289.88 745.90 288.10 C743.03 286.32 740.02 283.12 738.40 280.60 C736.78 278.08 736.47 275.70 736.20 273.00 C735.93 270.30 736.07 266.92 736.80 264.40 C737.53 261.88 738.72 259.52 740.60 257.90 C742.48 256.28 745.60 255.15 748.10 254.70 C750.60 254.25 754.35 255.12 755.60 255.20 Z"/><path d="M743.60 316.50 C743.27 315.37 742.82 311.92 741.60 309.70 C740.38 307.48 738.63 304.65 736.30 303.20 C733.97 301.75 730.67 300.82 727.60 301.00 C724.53 301.18 720.58 302.50 717.90 304.30 C715.22 306.10 712.93 309.12 711.50 311.80 C710.07 314.48 709.30 317.35 709.30 320.40 C709.30 323.45 709.88 327.03 711.50 330.10 C713.12 333.17 715.95 336.63 719.00 338.80 C722.05 340.97 726.20 342.48 729.80 343.10 C733.40 343.72 737.18 343.40 740.60 342.50 C744.02 341.60 747.62 339.77 750.30 337.70 C752.98 335.63 755.05 332.62 756.70 330.10 C758.35 327.58 759.62 323.85 760.20 322.60 L759.60 322.60 C759.30 323.32 759.18 324.93 757.80 326.90 C756.42 328.87 753.82 332.33 751.30 334.40 C748.78 336.47 745.93 338.40 742.70 339.30 C739.47 340.20 735.32 340.43 731.90 339.80 C728.48 339.17 724.70 337.47 722.20 335.50 C719.70 333.53 717.97 330.68 716.90 328.00 C715.83 325.32 715.45 322.10 715.80 319.40 C716.15 316.70 717.38 313.78 719.00 311.80 C720.62 309.82 723.17 308.22 725.50 307.50 C727.83 306.78 730.67 306.97 733.00 307.50 C735.33 308.03 738.08 309.08 739.50 310.70 C740.92 312.32 741.17 316.12 741.50 317.20 Z"/><path d="M868.60 314.00 C867.95 312.17 866.40 306.23 864.70 303.00 C863.00 299.77 861.22 297.42 858.40 294.60 C855.58 291.78 851.70 288.67 847.80 286.10 C843.90 283.53 839.23 281.05 835.00 279.20 C830.77 277.35 827.15 275.88 822.40 275.00 C817.65 274.12 811.80 273.63 806.50 273.90 C801.20 274.17 795.10 275.25 790.60 276.60 C786.10 277.95 782.98 279.90 779.50 282.00 C776.02 284.10 772.42 286.38 769.70 289.20 C766.98 292.02 764.82 295.48 763.20 298.90 C761.58 302.32 760.63 306.12 760.00 309.70 C759.37 313.28 759.05 316.82 759.40 320.40 C759.75 323.98 760.38 327.60 762.10 331.20 C763.82 334.80 766.65 338.95 769.70 342.00 C772.75 345.05 776.85 347.80 780.40 349.50 C783.95 351.20 787.48 351.78 791.00 352.20 C794.52 352.62 799.75 352.03 801.50 352.00 L801.50 351.30 C799.17 350.33 791.50 347.97 787.50 345.50 C783.50 343.03 780.15 339.75 777.50 336.50 C774.85 333.25 772.88 329.50 771.60 326.00 C770.32 322.50 769.87 319.00 769.80 315.50 C769.73 312.00 770.30 308.12 771.20 305.00 C772.10 301.88 773.43 299.33 775.20 296.80 C776.97 294.27 779.23 291.75 781.80 289.80 C784.37 287.85 786.48 286.60 790.60 285.10 C794.72 283.60 801.20 281.42 806.50 280.80 C811.80 280.18 817.65 280.68 822.40 281.40 C827.15 282.12 831.13 283.43 835.00 285.10 C838.87 286.77 842.07 288.93 845.60 291.40 C849.13 293.87 853.18 297.07 856.20 299.90 C859.22 302.73 861.83 305.80 863.70 308.40 C865.57 311.00 866.78 314.32 867.40 315.50 Z"/><path d="M868.20 319.00 C867.62 317.58 866.33 313.15 864.70 310.50 C863.07 307.85 860.87 305.22 858.40 303.10 C855.93 300.98 852.90 298.95 849.90 297.80 C846.90 296.65 843.58 296.03 840.40 296.20 C837.22 296.37 833.80 297.13 830.80 298.80 C827.80 300.47 824.52 303.02 822.40 306.20 C820.28 309.38 818.50 314.14 818.10 317.90 C817.70 321.66 818.43 325.90 820.00 328.75 C821.57 331.60 824.53 333.52 827.50 335.00 C830.47 336.48 836.08 337.17 837.80 337.60 L837.50 336.30 C836.25 335.46 831.98 333.30 830.00 331.25 C828.02 329.20 826.52 326.23 825.60 324.00 C824.68 321.77 824.17 320.68 824.50 317.90 C824.83 315.12 825.83 309.95 827.60 307.30 C829.37 304.65 832.45 303.15 835.10 302.00 C837.75 300.85 840.68 300.22 843.50 300.40 C846.32 300.58 849.35 301.77 852.00 303.10 C854.65 304.43 857.28 306.47 859.40 308.40 C861.52 310.33 863.33 312.52 864.70 314.70 C866.07 316.88 867.12 320.37 867.60 321.50 Z"/><path d="M867.2 312 L870.3 312 L870.3 324 Q868.75 325.6 867.2 324 Z"/><path d="M832.30 259.60 C832.29 260.08 831.83 261.19 832.25 262.51 C832.68 263.82 833.53 265.51 834.86 267.50 C836.20 269.49 838.11 271.95 840.28 274.44 C842.45 276.93 845.31 279.80 847.88 282.43 C850.45 285.06 853.23 287.76 855.71 290.23 C858.18 292.70 860.80 295.29 862.75 297.25 C864.70 299.20 866.63 301.18 867.41 301.96 L867.79 301.64 C867.16 300.74 865.56 298.49 863.98 296.22 C862.40 293.96 860.31 290.93 858.31 288.05 C856.32 285.17 854.16 281.96 852.02 278.97 C849.88 275.97 847.56 272.65 845.50 270.08 C843.43 267.50 841.34 265.19 839.62 263.52 C837.90 261.85 836.39 260.72 835.17 260.07 C833.95 259.42 832.78 259.68 832.30 259.60Z"/></g><path d="M868.75 241.9 C872.6 242 874.1 254 873.9 263 C873.6 276 870 290 868.75 303 C867.5 290 863.9 276 863.6 263 C863.4 254 864.9 242 868.75 241.9 Z"/><g transform="translate(0 804.8) scale(1 -1)"><g><path d="M756.00 252.60 C754.68 252.32 750.67 250.82 748.10 250.90 C745.53 250.98 742.93 251.57 740.60 253.10 C738.27 254.63 735.82 256.97 734.10 260.10 C732.38 263.23 730.67 268.48 730.30 271.90 C729.93 275.32 730.18 277.72 731.90 280.60 C733.62 283.48 737.00 286.97 740.60 289.20 C744.20 291.43 749.38 293.47 753.50 294.00 C757.62 294.53 762.43 293.20 765.30 292.40 C768.17 291.60 769.80 289.73 770.70 289.20 L769.70 290.20 C767.35 290.38 759.57 291.65 755.60 291.30 C751.63 290.95 748.77 289.88 745.90 288.10 C743.03 286.32 740.02 283.12 738.40 280.60 C736.78 278.08 736.47 275.70 736.20 273.00 C735.93 270.30 736.07 266.92 736.80 264.40 C737.53 261.88 738.72 259.52 740.60 257.90 C742.48 256.28 745.60 255.15 748.10 254.70 C750.60 254.25 754.35 255.12 755.60 255.20 Z"/><path d="M743.60 316.50 C743.27 315.37 742.82 311.92 741.60 309.70 C740.38 307.48 738.63 304.65 736.30 303.20 C733.97 301.75 730.67 300.82 727.60 301.00 C724.53 301.18 720.58 302.50 717.90 304.30 C715.22 306.10 712.93 309.12 711.50 311.80 C710.07 314.48 709.30 317.35 709.30 320.40 C709.30 323.45 709.88 327.03 711.50 330.10 C713.12 333.17 715.95 336.63 719.00 338.80 C722.05 340.97 726.20 342.48 729.80 343.10 C733.40 343.72 737.18 343.40 740.60 342.50 C744.02 341.60 747.62 339.77 750.30 337.70 C752.98 335.63 755.05 332.62 756.70 330.10 C758.35 327.58 759.62 323.85 760.20 322.60 L759.60 322.60 C759.30 323.32 759.18 324.93 757.80 326.90 C756.42 328.87 753.82 332.33 751.30 334.40 C748.78 336.47 745.93 338.40 742.70 339.30 C739.47 340.20 735.32 340.43 731.90 339.80 C728.48 339.17 724.70 337.47 722.20 335.50 C719.70 333.53 717.97 330.68 716.90 328.00 C715.83 325.32 715.45 322.10 715.80 319.40 C716.15 316.70 717.38 313.78 719.00 311.80 C720.62 309.82 723.17 308.22 725.50 307.50 C727.83 306.78 730.67 306.97 733.00 307.50 C735.33 308.03 738.08 309.08 739.50 310.70 C740.92 312.32 741.17 316.12 741.50 317.20 Z"/><path d="M868.60 314.00 C867.95 312.17 866.40 306.23 864.70 303.00 C863.00 299.77 861.22 297.42 858.40 294.60 C855.58 291.78 851.70 288.67 847.80 286.10 C843.90 283.53 839.23 281.05 835.00 279.20 C830.77 277.35 827.15 275.88 822.40 275.00 C817.65 274.12 811.80 273.63 806.50 273.90 C801.20 274.17 795.10 275.25 790.60 276.60 C786.10 277.95 782.98 279.90 779.50 282.00 C776.02 284.10 772.42 286.38 769.70 289.20 C766.98 292.02 764.82 295.48 763.20 298.90 C761.58 302.32 760.63 306.12 760.00 309.70 C759.37 313.28 759.05 316.82 759.40 320.40 C759.75 323.98 760.38 327.60 762.10 331.20 C763.82 334.80 766.65 338.95 769.70 342.00 C772.75 345.05 776.85 347.80 780.40 349.50 C783.95 351.20 787.48 351.78 791.00 352.20 C794.52 352.62 799.75 352.03 801.50 352.00 L801.50 351.30 C799.17 350.33 791.50 347.97 787.50 345.50 C783.50 343.03 780.15 339.75 777.50 336.50 C774.85 333.25 772.88 329.50 771.60 326.00 C770.32 322.50 769.87 319.00 769.80 315.50 C769.73 312.00 770.30 308.12 771.20 305.00 C772.10 301.88 773.43 299.33 775.20 296.80 C776.97 294.27 779.23 291.75 781.80 289.80 C784.37 287.85 786.48 286.60 790.60 285.10 C794.72 283.60 801.20 281.42 806.50 280.80 C811.80 280.18 817.65 280.68 822.40 281.40 C827.15 282.12 831.13 283.43 835.00 285.10 C838.87 286.77 842.07 288.93 845.60 291.40 C849.13 293.87 853.18 297.07 856.20 299.90 C859.22 302.73 861.83 305.80 863.70 308.40 C865.57 311.00 866.78 314.32 867.40 315.50 Z"/><path d="M868.20 319.00 C867.62 317.58 866.33 313.15 864.70 310.50 C863.07 307.85 860.87 305.22 858.40 303.10 C855.93 300.98 852.90 298.95 849.90 297.80 C846.90 296.65 843.58 296.03 840.40 296.20 C837.22 296.37 833.80 297.13 830.80 298.80 C827.80 300.47 824.52 303.02 822.40 306.20 C820.28 309.38 818.50 314.14 818.10 317.90 C817.70 321.66 818.43 325.90 820.00 328.75 C821.57 331.60 824.53 333.52 827.50 335.00 C830.47 336.48 836.08 337.17 837.80 337.60 L837.50 336.30 C836.25 335.46 831.98 333.30 830.00 331.25 C828.02 329.20 826.52 326.23 825.60 324.00 C824.68 321.77 824.17 320.68 824.50 317.90 C824.83 315.12 825.83 309.95 827.60 307.30 C829.37 304.65 832.45 303.15 835.10 302.00 C837.75 300.85 840.68 300.22 843.50 300.40 C846.32 300.58 849.35 301.77 852.00 303.10 C854.65 304.43 857.28 306.47 859.40 308.40 C861.52 310.33 863.33 312.52 864.70 314.70 C866.07 316.88 867.12 320.37 867.60 321.50 Z"/><path d="M867.2 312 L870.3 312 L870.3 324 Q868.75 325.6 867.2 324 Z"/></g><g transform="translate(1737.5 0) scale(-1 1)"><path d="M756.00 252.60 C754.68 252.32 750.67 250.82 748.10 250.90 C745.53 250.98 742.93 251.57 740.60 253.10 C738.27 254.63 735.82 256.97 734.10 260.10 C732.38 263.23 730.67 268.48 730.30 271.90 C729.93 275.32 730.18 277.72 731.90 280.60 C733.62 283.48 737.00 286.97 740.60 289.20 C744.20 291.43 749.38 293.47 753.50 294.00 C757.62 294.53 762.43 293.20 765.30 292.40 C768.17 291.60 769.80 289.73 770.70 289.20 L769.70 290.20 C767.35 290.38 759.57 291.65 755.60 291.30 C751.63 290.95 748.77 289.88 745.90 288.10 C743.03 286.32 740.02 283.12 738.40 280.60 C736.78 278.08 736.47 275.70 736.20 273.00 C735.93 270.30 736.07 266.92 736.80 264.40 C737.53 261.88 738.72 259.52 740.60 257.90 C742.48 256.28 745.60 255.15 748.10 254.70 C750.60 254.25 754.35 255.12 755.60 255.20 Z"/><path d="M743.60 316.50 C743.27 315.37 742.82 311.92 741.60 309.70 C740.38 307.48 738.63 304.65 736.30 303.20 C733.97 301.75 730.67 300.82 727.60 301.00 C724.53 301.18 720.58 302.50 717.90 304.30 C715.22 306.10 712.93 309.12 711.50 311.80 C710.07 314.48 709.30 317.35 709.30 320.40 C709.30 323.45 709.88 327.03 711.50 330.10 C713.12 333.17 715.95 336.63 719.00 338.80 C722.05 340.97 726.20 342.48 729.80 343.10 C733.40 343.72 737.18 343.40 740.60 342.50 C744.02 341.60 747.62 339.77 750.30 337.70 C752.98 335.63 755.05 332.62 756.70 330.10 C758.35 327.58 759.62 323.85 760.20 322.60 L759.60 322.60 C759.30 323.32 759.18 324.93 757.80 326.90 C756.42 328.87 753.82 332.33 751.30 334.40 C748.78 336.47 745.93 338.40 742.70 339.30 C739.47 340.20 735.32 340.43 731.90 339.80 C728.48 339.17 724.70 337.47 722.20 335.50 C719.70 333.53 717.97 330.68 716.90 328.00 C715.83 325.32 715.45 322.10 715.80 319.40 C716.15 316.70 717.38 313.78 719.00 311.80 C720.62 309.82 723.17 308.22 725.50 307.50 C727.83 306.78 730.67 306.97 733.00 307.50 C735.33 308.03 738.08 309.08 739.50 310.70 C740.92 312.32 741.17 316.12 741.50 317.20 Z"/><path d="M868.60 314.00 C867.95 312.17 866.40 306.23 864.70 303.00 C863.00 299.77 861.22 297.42 858.40 294.60 C855.58 291.78 851.70 288.67 847.80 286.10 C843.90 283.53 839.23 281.05 835.00 279.20 C830.77 277.35 827.15 275.88 822.40 275.00 C817.65 274.12 811.80 273.63 806.50 273.90 C801.20 274.17 795.10 275.25 790.60 276.60 C786.10 277.95 782.98 279.90 779.50 282.00 C776.02 284.10 772.42 286.38 769.70 289.20 C766.98 292.02 764.82 295.48 763.20 298.90 C761.58 302.32 760.63 306.12 760.00 309.70 C759.37 313.28 759.05 316.82 759.40 320.40 C759.75 323.98 760.38 327.60 762.10 331.20 C763.82 334.80 766.65 338.95 769.70 342.00 C772.75 345.05 776.85 347.80 780.40 349.50 C783.95 351.20 787.48 351.78 791.00 352.20 C794.52 352.62 799.75 352.03 801.50 352.00 L801.50 351.30 C799.17 350.33 791.50 347.97 787.50 345.50 C783.50 343.03 780.15 339.75 777.50 336.50 C774.85 333.25 772.88 329.50 771.60 326.00 C770.32 322.50 769.87 319.00 769.80 315.50 C769.73 312.00 770.30 308.12 771.20 305.00 C772.10 301.88 773.43 299.33 775.20 296.80 C776.97 294.27 779.23 291.75 781.80 289.80 C784.37 287.85 786.48 286.60 790.60 285.10 C794.72 283.60 801.20 281.42 806.50 280.80 C811.80 280.18 817.65 280.68 822.40 281.40 C827.15 282.12 831.13 283.43 835.00 285.10 C838.87 286.77 842.07 288.93 845.60 291.40 C849.13 293.87 853.18 297.07 856.20 299.90 C859.22 302.73 861.83 305.80 863.70 308.40 C865.57 311.00 866.78 314.32 867.40 315.50 Z"/><path d="M868.20 319.00 C867.62 317.58 866.33 313.15 864.70 310.50 C863.07 307.85 860.87 305.22 858.40 303.10 C855.93 300.98 852.90 298.95 849.90 297.80 C846.90 296.65 843.58 296.03 840.40 296.20 C837.22 296.37 833.80 297.13 830.80 298.80 C827.80 300.47 824.52 303.02 822.40 306.20 C820.28 309.38 818.50 314.14 818.10 317.90 C817.70 321.66 818.43 325.90 820.00 328.75 C821.57 331.60 824.53 333.52 827.50 335.00 C830.47 336.48 836.08 337.17 837.80 337.60 L837.50 336.30 C836.25 335.46 831.98 333.30 830.00 331.25 C828.02 329.20 826.52 326.23 825.60 324.00 C824.68 321.77 824.17 320.68 824.50 317.90 C824.83 315.12 825.83 309.95 827.60 307.30 C829.37 304.65 832.45 303.15 835.10 302.00 C837.75 300.85 840.68 300.22 843.50 300.40 C846.32 300.58 849.35 301.77 852.00 303.10 C854.65 304.43 857.28 306.47 859.40 308.40 C861.52 310.33 863.33 312.52 864.70 314.70 C866.07 316.88 867.12 320.37 867.60 321.50 Z"/><path d="M867.2 312 L870.3 312 L870.3 324 Q868.75 325.6 867.2 324 Z"/></g></g></g></svg><svg class="a" style="left:0;top:0" width="1920" height="1039" viewBox="0 0 1920 1039"><path d="M713.6500000000001 369.1 V399.8 M713.6500000000001 371.55 H721.7325 A5.9894999999999925 5.9894999999999925 0 0 1 721.7325 383.529 H713.6500000000001 M713.6500000000001 383.529 H722.2394999999999 A6.910500000000013 6.910500000000013 0 0 1 722.2394999999999 397.35 H713.6500000000001M756.8 371.55 H739.75 V397.35 H756.8 M739.75 384.45000000000005 H754.4599999999999M764.0175 399.8 L774.5 376.6820391379471 L784.9825 399.8 M767.9152300176984 391.204 H781.0847699823016M793.75 369.1 V388.30000000000007 A9.049999999999955 9.049999999999955 0 0 0 811.8499999999999 388.30000000000007 V369.1M818.3 371.55 H840 M829.15 369.1 V399.8M847.595 369.1 L856.65 384.45000000000005 L865.7049999999999 369.1 M856.65 384.45000000000005 V399.8M907.93 375.68 C907.41 375.12 906.07 373.01 904.83 372.32 C903.60 371.64 902.02 371.46 900.53 371.55 C899.04 371.64 897.01 371.72 895.89 372.84 C894.77 373.96 893.83 376.58 893.83 378.26 C893.83 379.94 894.69 381.78 895.89 382.90 C897.09 384.02 899.27 384.28 901.05 384.97 C902.83 385.65 905.32 385.96 906.55 387.03 C907.79 388.11 908.50 389.91 908.45 391.42 C908.39 392.92 907.44 395.07 906.21 396.06 C904.98 397.05 902.71 397.31 901.05 397.35 C899.39 397.39 897.52 397.09 896.23 396.32 C894.94 395.54 893.80 393.31 893.31 392.71M917.0175 399.8 L927.725 376.53951062786 L938.4325 399.8 M920.9744962835882 391.204 H934.4755037164118M949.1500000000001 369.1 V397.35 H964.6M968.25 384.45000000000005 A13.399999999999977 12.900000000000006 0 1 0 995.05 384.45000000000005 A13.399999999999977 12.900000000000006 0 1 0 968.25 384.45000000000005 ZM1005.35 399.8 V369.1 M1023.8 369.1 V399.8" fill="none" stroke="#cc0a7f" stroke-width="4.9" stroke-linejoin="miter" stroke-miterlimit="8"/><path d="M1002.9 369.1 L1009.025 369.1 L1026.25 399.8 L1020.125 399.8 Z" fill="#cc0a7f"/></svg><svg class="a" style="left:0;top:0" width="1920" height="1039" viewBox="0 0 1920 1039"><g fill="none" stroke="#858585" stroke-width="2.8" stroke-linecap="round" stroke-linejoin="round"><path d="M765.6 424.6 C762.2 422.3 763.2 418.6 767 417 C771 415.3 775 414 778.8 412.8 L762.6 441.2"/><path d="M787.4 413.4 L773.8 434.2"/><path d="M776.4 429.2 C780.4 424.4 784.4 421.6 787.8 421.8 C790.8 422.2 789.6 426.4 788.1 429.4 C786.6 432.4 785.7 434.4 788 434.2 C789.6 434.1 791 433 792.2 431.8"/><path d="M794.6 434.2 L797.2 418.2 C798.6 420.4 801.6 421.6 801.2 425 C800.8 428.6 797.6 432 799.6 433.6 C801.2 434.6 803.2 432.6 804.6 429.6"/><path d="M809.2 434.4 L815.4 424 C817.2 421 819.8 419.8 822.4 419.9 C825.4 420 825.4 422.4 824.4 425 C823.4 427.6 821.4 431 821.5 432.8 C821.6 434.6 823.2 434.6 824.6 433.8 C825.8 433 827 431.8 828.2 430.6"/><path d="M828.2 430.6 C831.5 429.5 835.5 427 837.2 424 C838.6 421.5 836.6 419.4 834.6 420 C831.2 421 828.6 426 828.6 430 C828.6 433 830.2 434.6 832.6 434.3 C834.6 434 836.6 433 838.2 431.6"/><path d="M843.6 420.2 L839.8 430.6 C839 433 840 434.6 842 434.3 C845.2 434 848.6 428 852.8 420.2 L849.2 431 C848.6 433 849.6 434.6 851.1 434.2 C852.6 434 854.1 432.6 855.6 431.2"/><path d="M855.6 431.2 C859 429.8 862.8 427 864.6 424 C866 421.5 864 419.4 862 420 C858.6 421 856 426 856 430 C856 433 857.6 434.6 860 434.3 C862 434 864 433 865.6 431.6"/><path d="M868.6 433.8 L871.2 417.4 C872.6 419.8 875.2 421 874.8 424.4 C874.4 428 871.8 431.8 873.6 433.2 C875.2 434.2 876.8 432 878 429.2"/><path d="M893.8 422.4 C891.2 420.6 892.6 416.4 896.4 415.2 C900.6 414 905.6 414 909.4 413.4"/><path d="M909.4 413.6 C905.4 419 901.8 426.5 898.6 431.2 C896.2 434.8 893.2 436.8 890.4 435.8 C887.8 434.8 887.6 431.6 889.4 429.6"/><path d="M906.2 431.6 C910 430 914.6 426.8 916.4 423.4 C917.6 420.8 915.8 418.9 913.6 419.6 C910 420.8 907 425.8 907 429.8 C907 433 908.6 434.5 911 434.2 C913 433.9 915.2 432.6 917 430.8"/><path d="M920.2 433.8 L923.6 417.2 C925 419.6 927.8 421 927.4 424.4 C927 427.8 924.4 431.6 926.2 433 C927.6 434 929.4 432.2 930.6 430.2"/><path d="M929.2 434.2 L934.4 423.4 C935.8 420.8 937.6 420 939.2 420.2 C941 420.6 940.4 423.4 939.2 426.6 C938.2 429.4 936.8 432.4 935.6 434.2"/><path d="M937.2 430.2 C939.6 425.4 943.2 421.2 946.8 420.6 C950.2 420.2 949.6 423.6 948.2 427 C947 430 945.8 433.2 947.6 434.6 C949.4 435.4 951.2 433.6 952.4 432"/><path d="M957.8 420.8 L955 431.6 C954.4 433.6 955.6 434.8 957.2 434.2 C958.4 433.8 959.6 432.6 960.6 431.4"/><path d="M958.8 434.4 L964.2 424 C965.8 421.2 968.4 420 970.8 420.2 C974.2 420.4 974 423 972.8 426.4 C971.6 429.6 970.4 432.8 972.2 434.2 C973.8 435 975.6 433 976.6 430.8"/><circle cx="960.8" cy="416.6" r="1.3" fill="#868686" stroke="none"/></g></svg><svg class="a" style="left:0;top:0" width="1920" height="1039" viewBox="0 0 1920 1039"><path d="M717.64 617.85 H728.15 L718.65 636.35 H729.8M746.6 617.85 H734.15 V636.35 H746.6 M734.15 627.1 H744.908M754.0 616.2 V638.0M758 617.85 H774 M766.0 616.2 V638.0M786.69 617.85 H798.15 L787.65 636.35 H799.8M805.4499999999999 616.2 V629.9 A6.4500000000000455 6.4500000000000455 0 0 0 818.35 629.9 V616.2M846 617.85 H833.35 V636.35 H846 M833.35 627.1 H844.284M851.65 638.0 V616.2 M865.0500000000001 616.2 V638.0M869.4 617.85 H885.2 M877.3 616.2 V638.0M900.82 620.81 C900.45 620.41 899.49 618.90 898.61 618.40 C897.72 617.91 896.60 617.79 895.53 617.85 C894.47 617.91 893.01 617.97 892.21 618.77 C891.41 619.58 890.73 621.46 890.73 622.66 C890.73 623.86 891.35 625.19 892.21 625.99 C893.07 626.79 894.63 626.98 895.90 627.47 C897.17 627.96 898.95 628.18 899.84 628.95 C900.72 629.72 901.23 631.02 901.19 632.10 C901.15 633.17 900.47 634.72 899.59 635.43 C898.71 636.13 897.09 636.32 895.90 636.35 C894.71 636.38 893.38 636.16 892.46 635.61 C891.53 635.06 890.71 633.45 890.37 633.02M909.15 638.0 V617.85 H913.671 A5.278999999999996 5.278999999999996 0 0 1 913.671 628.408 H909.15M924.3975 638.0 L932.35 621.0146637845528 L940.3025 638.0 M927.2553804319372 631.896 H937.4446195680629M946.65 638.0 V616.2 M959.75 616.2 V638.0M968.15 638.0 V616.2 M980.85 616.2 V638.0M1001.2 617.85 H989.25 V636.35 H1001.2 M989.25 627.1 H999.5680000000001M1007.05 638.0 V616.2 M1019.75 616.2 V638.0" fill="none" stroke="#ffffff" stroke-width="3.3" stroke-linejoin="miter" stroke-miterlimit="8"/><path d="M850 616.2 L854.125 616.2 L866.7 638.0 L862.575 638.0 ZM945 616.2 L949.125 616.2 L961.4 638.0 L957.275 638.0 ZM966.5 616.2 L970.625 616.2 L982.5 638.0 L978.375 638.0 ZM1005.4 616.2 L1009.525 616.2 L1021.4 638.0 L1017.275 638.0 Z" fill="#ffffff"/></svg><div class="a" style="left:715px;top:612.5px;width:308px;height:1px;background:#8a4a7a;"></div><div class="a" style="left:715px;top:638.5px;width:308px;height:1px;background:#8a4a7a;"></div><div class="a" style="left:715px;top:644.5px;width:308px;height:1px;background:#8a4a7a;"></div><div class="a" style="left:714.5px;top:612px;width:1px;height:33px;background:#5f7f6f;"></div><div class="a" style="left:1022.5px;top:612px;width:1px;height:33px;background:#5f7f6f;"></div><div class="a" style="left:712.5px;top:610.0px;width:5px;height:5px;background:#ffffff;border:1px solid #3f6f52"></div><div class="a" style="left:712.5px;top:642.5px;width:5px;height:5px;background:#ffffff;border:1px solid #3f6f52"></div><div class="a" style="left:866.5px;top:610.0px;width:5px;height:5px;background:#ffffff;border:1px solid #3f6f52"></div><div class="a" style="left:866.5px;top:642.5px;width:5px;height:5px;background:#ffffff;border:1px solid #3f6f52"></div><div class="a" style="left:1020.5px;top:610.0px;width:5px;height:5px;background:#ffffff;border:1px solid #3f6f52"></div><div class="a" style="left:1020.5px;top:642.5px;width:5px;height:5px;background:#ffffff;border:1px solid #3f6f52"></div><div class="a" style="left:712.5px;top:625.5px;width:5px;height:5px;background:#ffffff;border:1px solid #3f6f52"></div><div class="a" style="left:1020.5px;top:625.5px;width:5px;height:5px;background:#ffffff;border:1px solid #3f6f52"></div><div class="a" style="left:1026px;top:627.5px;width:10px;height:1px;background:#3f6f52;"></div><svg class="a" style="left:1035px;top:622px;" width="12" height="12" viewBox="0 0 12 12"><circle cx="6" cy="6" r="4.2" fill="#fff" stroke="#3f6f52" stroke-width="1.1"/></svg><svg class="a" style="left:5px;top:67px;" width="12" height="9" viewBox="0 0 12 9"><path d="M5.5 0.5 L0.5 4.5 L5.5 8.5Z M11 0.5 L6 4.5 L11 8.5Z" fill="#cfcfcf"/></svg><div class="a" style="left:25.0px;top:80px;width:1.1px;height:4px;background:#1c1c1c;"></div><div class="a" style="left:26.9px;top:80px;width:1.1px;height:4px;background:#1c1c1c;"></div><div class="a" style="left:28.8px;top:80px;width:1.1px;height:4px;background:#1c1c1c;"></div><div class="a" style="left:30.7px;top:80px;width:1.1px;height:4px;background:#1c1c1c;"></div><div class="a" style="left:32.6px;top:80px;width:1.1px;height:4px;background:#1c1c1c;"></div><div class="a" style="left:34.5px;top:80px;width:1.1px;height:4px;background:#1c1c1c;"></div><div class="a" style="left:36.4px;top:80px;width:1.1px;height:4px;background:#1c1c1c;"></div><div class="a" style="left:38.3px;top:80px;width:1.1px;height:4px;background:#1c1c1c;"></div><div class="a" style="left:40.2px;top:80px;width:1.1px;height:4px;background:#1c1c1c;"></div><div class="a" style="left:42.099999999999994px;top:80px;width:1.1px;height:4px;background:#1c1c1c;"></div><div class="a" style="left:44.0px;top:80px;width:1.1px;height:4px;background:#1c1c1c;"></div><div class="a" style="left:7px;top:94px;width:28px;height:22px;background:#343434;"></div><svg class="a" style="left:10.0px;top:93.0px;" width="22" height="22" viewBox="0 0 22 22"><path d="M6 3 L6 19 L10 15 L13 21 L15 20 L12.5 14 L18 14 Z" fill="#343434" stroke="#d8d8d8" stroke-width="1.1"/></svg><svg class="a" style="left:40.0px;top:93.0px;" width="22" height="22" viewBox="0 0 22 22"><path d="M6 3 L6 19 L10 15 L13 21 L15 20 L12.5 14 L18 14 Z" fill="#bcbcbc"/></svg><svg class="a" style="left:59px;top:111px;" width="4" height="4" viewBox="0 0 4 4"><path d="M4 0 L4 4 L0 4Z" fill="#d8d8d8"/></svg><svg class="a" style="left:10.0px;top:118.0px;" width="22" height="22" viewBox="0 0 22 22"><path d="M10 10 L19 19" stroke="#d0d0d0" stroke-width="2.4"/><path d="M7 2 L8 6 L12 5 L9 8 L12 11 L8 10 L7 14 L6 10 L2 11 L5 8 L2 5 L6 6Z" fill="#e0e0e0"/></svg><svg class="a" style="left:40.0px;top:118.0px;" width="22" height="22" viewBox="0 0 22 22"><ellipse cx="11" cy="9" rx="8" ry="5" fill="none" stroke="#cfcfcf" stroke-width="1.6"/><path d="M10 7 L20 11 L10 16Z" fill="#d0d0d0"/><path d="M5 13 Q3 17 7 18" fill="none" stroke="#cfcfcf" stroke-width="1.4"/></svg><div class="a" style="left:6px;top:141px;width:60px;height:1px;background:#3a3a3a;"></div><svg class="a" style="left:10.0px;top:144.0px;" width="22" height="22" viewBox="0 0 22 22"><path d="M4 19 L7 10 L14 5 L18 9 L13 16Z" fill="#cfcfcf"/><path d="M14 3 L20 9" stroke="#cfcfcf" stroke-width="2.5"/><path d="M5 18 L10 12" stroke="#474747" stroke-width="1.2"/></svg><svg class="a" style="left:29px;top:162px;" width="4" height="4" viewBox="0 0 4 4"><path d="M4 0 L4 4 L0 4Z" fill="#d8d8d8"/></svg><svg class="a" style="left:40.0px;top:144.0px;" width="22" height="22" viewBox="0 0 22 22"><path d="M4 4 H18 V8 H17 Q16.5 5.5 14 5.5 H12.3 V18 H14.5 V19.5 H7.5 V18 H9.7 V5.5 H8 Q5.5 5.5 5 8 H4Z" fill="#d4d4d4"/></svg><svg class="a" style="left:59px;top:162px;" width="4" height="4" viewBox="0 0 4 4"><path d="M4 0 L4 4 L0 4Z" fill="#d8d8d8"/></svg><svg class="a" style="left:10.0px;top:168.0px;" width="22" height="22" viewBox="0 0 22 22"><path d="M4 19 L18 5" stroke="#d0d0d0" stroke-width="1.6"/></svg><svg class="a" style="left:29px;top:186px;" width="4" height="4" viewBox="0 0 4 4"><path d="M4 0 L4 4 L0 4Z" fill="#d8d8d8"/></svg><svg class="a" style="left:40.0px;top:168.0px;" width="22" height="22" viewBox="0 0 22 22"><ellipse cx="11" cy="11" rx="8.5" ry="6" fill="#8c8c8c" stroke="#d8d8d8" stroke-width="1.2"/></svg><svg class="a" style="left:59px;top:186px;" width="4" height="4" viewBox="0 0 4 4"><path d="M4 0 L4 4 L0 4Z" fill="#d8d8d8"/></svg><svg class="a" style="left:10.0px;top:192.0px;" width="22" height="22" viewBox="0 0 22 22"><path d="M9 14 L19 3 L20 4 L11 16Z" fill="#d0d0d0"/><path d="M3 19 Q6 19 7 15 Q9 13 11 15.5 Q10 19 3 19Z" fill="#d0d0d0"/></svg><svg class="a" style="left:29px;top:210px;" width="4" height="4" viewBox="0 0 4 4"><path d="M4 0 L4 4 L0 4Z" fill="#d8d8d8"/></svg><svg class="a" style="left:40.0px;top:192.0px;" width="22" height="22" viewBox="0 0 22 22"><path d="M4 19 L6 13 L16 3 L19.5 6.5 L9.5 16.5Z" fill="#bdbdbd" stroke="#e0e0e0" stroke-width="0.8"/><path d="M4 19 L6 13 L9.5 16.5Z" fill="#eee"/></svg><svg class="a" style="left:59px;top:210px;" width="4" height="4" viewBox="0 0 4 4"><path d="M4 0 L4 4 L0 4Z" fill="#d8d8d8"/></svg><svg class="a" style="left:10.0px;top:216.0px;" width="22" height="22" viewBox="0 0 22 22"><path d="M3 8 H11 V19 H3Z" fill="#c8c8c8"/><path d="M8 16 Q10 10 14 12 L19 6" stroke="#e8e8e8" stroke-width="2.2" fill="none"/><path d="M6 15 Q9 11 12 14 Q10 17 6 15Z" fill="#333"/></svg><svg class="a" style="left:29px;top:234px;" width="4" height="4" viewBox="0 0 4 4"><path d="M4 0 L4 4 L0 4Z" fill="#d8d8d8"/></svg><svg class="a" style="left:40.0px;top:216.0px;" width="22" height="22" viewBox="0 0 22 22"><path d="M3 15 L11 6 H19 L12 15Z" fill="#e0e0e0"/><path d="M3 15 H12 V19 H3Z" fill="#9a9a9a"/><path d="M12 15 L19 6 V10 L12 19Z" fill="#b0b0b0"/></svg><svg class="a" style="left:59px;top:234px;" width="4" height="4" viewBox="0 0 4 4"><path d="M4 0 L4 4 L0 4Z" fill="#d8d8d8"/></svg><div class="a" style="left:6px;top:239px;width:60px;height:1px;background:#3a3a3a;"></div><svg class="a" style="left:10.0px;top:242.0px;" width="22" height="22" viewBox="0 0 22 22"><circle cx="11" cy="12" r="7" fill="none" stroke="#cfcfcf" stroke-width="1.6" stroke-dasharray="3 2"/><path d="M10 2 L14 5 L10 8Z" fill="#cfcfcf"/></svg><svg class="a" style="left:29px;top:260px;" width="4" height="4" viewBox="0 0 4 4"><path d="M4 0 L4 4 L0 4Z" fill="#d8d8d8"/></svg><svg class="a" style="left:40.0px;top:242.0px;" width="22" height="22" viewBox="0 0 22 22"><rect x="3" y="10" width="9" height="9" fill="none" stroke="#cfcfcf" stroke-width="1.2"/><rect x="8" y="4" width="11" height="10" fill="#777" stroke="#cfcfcf" stroke-width="1.2"/><path d="M11 11 L17 6 M14 6 H17 V9" stroke="#eee" stroke-width="1.2" fill="none"/></svg><svg class="a" style="left:59px;top:260px;" width="4" height="4" viewBox="0 0 4 4"><path d="M4 0 L4 4 L0 4Z" fill="#d8d8d8"/></svg><svg class="a" style="left:10.0px;top:266.0px;" width="22" height="22" viewBox="0 0 22 22"><path d="M3 12 Q8 6 12 12 Q15 17 19 10" stroke="#cfcfcf" stroke-width="2.5" fill="none"/><circle cx="6" cy="17" r="2" fill="none" stroke="#eee"/><circle cx="11" cy="12" r="2" fill="#eee"/></svg><svg class="a" style="left:29px;top:284px;" width="4" height="4" viewBox="0 0 4 4"><path d="M4 0 L4 4 L0 4Z" fill="#d8d8d8"/></svg><svg class="a" style="left:40.0px;top:266.0px;" width="22" height="22" viewBox="0 0 22 22"><rect x="6" y="6" width="13" height="11" fill="none" stroke="#cfcfcf" stroke-dasharray="2 2"/><path d="M3 3 L3 14 L6 11 L8 15 L9.5 14 L7.5 10 L11 10Z" fill="#d8d8d8"/></svg><svg class="a" style="left:10.0px;top:291.0px;" width="22" height="22" viewBox="0 0 22 22"><circle cx="9" cy="10" r="6" fill="#8a8a8a" stroke="#cfcfcf"/><path d="M4 10 H14" stroke="#fff" stroke-dasharray="1 1"/><path d="M12 10 L12 19 L15 16 L19 17Z" fill="#ddd"/></svg><svg class="a" style="left:29px;top:309px;" width="4" height="4" viewBox="0 0 4 4"><path d="M4 0 L4 4 L0 4Z" fill="#d8d8d8"/></svg><svg class="a" style="left:40.0px;top:291.0px;" width="22" height="22" viewBox="0 0 22 22"><path d="M3 18 H19 M5 4 V18 M9 6 V18 M13 9 V18 M17 12 V18 M5 8 L17 12" stroke="#cfcfcf" stroke-width="1.6"/></svg><svg class="a" style="left:59px;top:309px;" width="4" height="4" viewBox="0 0 4 4"><path d="M4 0 L4 4 L0 4Z" fill="#d8d8d8"/></svg><div class="a" style="left:6px;top:314px;width:60px;height:1px;background:#3a3a3a;"></div><svg class="a" style="left:10.0px;top:316.0px;" width="22" height="22" viewBox="0 0 22 22"><rect x="3" y="4" width="16" height="14" fill="none" stroke="#cfcfcf" stroke-width="1.2"/><path d="M3 10 Q11 6 19 12 M9 4 Q12 11 8 18 M14 4 Q16 12 15 18" stroke="#cfcfcf" fill="none"/></svg><svg class="a" style="left:40.0px;top:316.0px;" width="22" height="22" viewBox="0 0 22 22"><defs><linearGradient id="tg"><stop offset="0" stop-color="#555"/><stop offset="1" stop-color="#ddd"/></linearGradient></defs><rect x="3" y="5" width="16" height="12" fill="url(#tg)" stroke="#ddd"/></svg><svg class="a" style="left:10.0px;top:340.0px;" width="22" height="22" viewBox="0 0 22 22"><path d="M3 19 L4 15 L12 7 L15 10 L7 18Z" fill="none" stroke="#ddd" stroke-width="1.4"/><path d="M12 5 L15 2 L20 7 L17 10Z" fill="#ddd"/></svg><svg class="a" style="left:29px;top:358px;" width="4" height="4" viewBox="0 0 4 4"><path d="M4 0 L4 4 L0 4Z" fill="#d8d8d8"/></svg><svg class="a" style="left:40.0px;top:340.0px;" width="22" height="22" viewBox="0 0 22 22"><rect x="3" y="3" width="8" height="8" fill="#999" stroke="#ddd"/><rect x="6" y="6" width="8" height="8" fill="#888" stroke="#ddd"/><circle cx="15" cy="15" r="5" fill="#777" stroke="#ddd" stroke-width="1.2"/></svg><div class="a" style="left:6px;top:363px;width:60px;height:1px;background:#3a3a3a;"></div><svg class="a" style="left:10.0px;top:366.0px;" width="22" height="22" viewBox="0 0 22 22"><rect x="8" y="8" width="9" height="12" rx="1" fill="#777" stroke="#ddd" stroke-width="1.2"/><circle cx="12.5" cy="14" r="2.2" fill="none" stroke="#ddd"/><rect x="10" y="5" width="5" height="3" fill="#ddd"/><path d="M2 3 h1 M5 3 h1 M3 6 h1 M6 5 h1" stroke="#ddd"/></svg><svg class="a" style="left:29px;top:384px;" width="4" height="4" viewBox="0 0 4 4"><path d="M4 0 L4 4 L0 4Z" fill="#d8d8d8"/></svg><svg class="a" style="left:40.0px;top:366.0px;" width="22" height="22" viewBox="0 0 22 22"><path d="M3 19 H19" stroke="#ddd" stroke-width="1.3"/><rect x="4" y="11" width="2.5" height="8" fill="#ddd"/><rect x="8" y="5" width="2.5" height="14" fill="#ddd"/><rect x="12" y="9" width="2.5" height="10" fill="#ddd"/><rect x="16" y="7" width="2.5" height="12" fill="#ddd"/></svg><svg class="a" style="left:59px;top:384px;" width="4" height="4" viewBox="0 0 4 4"><path d="M4 0 L4 4 L0 4Z" fill="#d8d8d8"/></svg><div class="a" style="left:6px;top:389px;width:60px;height:1px;background:#3a3a3a;"></div><svg class="a" style="left:10.0px;top:391.0px;" width="22" height="22" viewBox="0 0 22 22"><rect x="5" y="6" width="12" height="10" fill="#8a8a8a"/><path d="M5 2 V20 M17 2 V20 M1 6 H21 M1 16 H21" stroke="#ddd" stroke-width="1" stroke-dasharray="4 8"/></svg><svg class="a" style="left:40.0px;top:391.0px;" width="22" height="22" viewBox="0 0 22 22"><path d="M3 18 L15 5 L19 4 L18 8 L6 17Z" fill="#cfcfcf"/><path d="M3 18 L9 13" stroke="#474747"/></svg><svg class="a" style="left:59px;top:409px;" width="4" height="4" viewBox="0 0 4 4"><path d="M4 0 L4 4 L0 4Z" fill="#d8d8d8"/></svg><svg class="a" style="left:10.0px;top:415.0px;" width="22" height="22" viewBox="0 0 22 22"><path d="M6 19 Q3 15 3 12 L3 9 Q4 8 5 9 L6 12 L6 5 Q7 4 8 5 L8.5 11 L9 3.5 Q10 2.5 11 3.5 L11.5 11 L12.5 4.5 Q13.5 3.5 14.5 4.5 L14 11.5 L16 7.5 Q17 7 17.5 8 L15.5 16 Q14 19 12 20Z" fill="#cfcfcf"/></svg><svg class="a" style="left:29px;top:433px;" width="4" height="4" viewBox="0 0 4 4"><path d="M4 0 L4 4 L0 4Z" fill="#d8d8d8"/></svg><svg class="a" style="left:40.0px;top:415.0px;" width="22" height="22" viewBox="0 0 22 22"><circle cx="9" cy="9" r="5.5" fill="#777" stroke="#ddd" stroke-width="1.8"/><path d="M13 13 L19 19" stroke="#ddd" stroke-width="3"/></svg><div class="a" style="left:6px;top:440px;width:60px;height:1px;background:#3a3a3a;"></div><div class="a" style="left:24px;top:461px;width:36px;height:36px;background:#ffffff;border:1px solid #151515"></div><div class="a" style="left:34px;top:471px;width:16px;height:16px;background:#474747;border:1px solid #151515"></div><svg class="a" style="left:24px;top:461px;" width="36" height="36" viewBox="0 0 36 36"><path d="M1.5 34.5 L34.5 1.5" stroke="#c8102e" stroke-width="2.8"/></svg><div class="a" style="left:6px;top:443px;width:36px;height:36px;background:#ffffff;border:1px solid #151515"></div><svg class="a" style="left:48px;top:443px;" width="14" height="15" viewBox="0 0 14 15"><path d="M3 3.5 Q10 2.5 10.5 10" fill="none" stroke="#d8d8d8" stroke-width="1.3"/><path d="M1 3.5 L4.5 1 L4.5 6Z M10.5 13.5 L8 10 L13 10Z" fill="#d8d8d8"/></svg><svg class="a" style="left:5px;top:484px;" width="14" height="15" viewBox="0 0 14 15"><rect x="1" y="1" width="8" height="8" fill="#e0e0e0" stroke="#151515" stroke-width="1"/><rect x="5" y="5" width="8" height="8" fill="#151515" stroke="#d0d0d0" stroke-width="1"/><rect x="2" y="2" width="6" height="6" fill="#e0e0e0"/></svg><div class="a" style="left:7px;top:504px;width:61px;height:19px;background:#3a3a3a;border:1px solid #2d2d2d"></div><div class="a" style="left:27px;top:505px;width:1px;height:17px;background:#2d2d2d;"></div><div class="a" style="left:47px;top:505px;width:1px;height:17px;background:#2d2d2d;"></div><div class="a" style="left:8px;top:505px;width:19px;height:17px;background:#3c3c3c;"></div><div class="a" style="left:28px;top:505px;width:19px;height:17px;background:#505050;"></div><div class="a" style="left:48px;top:505px;width:19px;height:17px;background:#4a4a4a;"></div><div class="a" style="left:11px;top:507px;width:12px;height:13px;background:#fff;border:1px solid #111"></div><svg class="a" style="left:31px;top:507px;" width="13" height="13" viewBox="0 0 13 13"><defs><linearGradient id="g2"><stop offset="0" stop-color="#fff"/><stop offset="1" stop-color="#222"/></linearGradient></defs><rect x="0.5" y="0.5" width="12" height="12" fill="url(#g2)" stroke="#111"/></svg><svg class="a" style="left:51px;top:507px;" width="13" height="13" viewBox="0 0 13 13"><rect x="0.5" y="0.5" width="12" height="12" fill="#fff" stroke="#111"/><path d="M1 12 L12 1" stroke="#c8102e" stroke-width="1.6"/></svg><div class="a" style="left:7px;top:529px;width:61px;height:17px;background:#3a3a3a;border:1px solid #2d2d2d"></div><div class="a" style="left:28px;top:530px;width:19px;height:15px;background:#555;"></div><div class="a" style="left:48px;top:530px;width:19px;height:15px;background:#4a4a4a;"></div><svg class="a" style="left:11px;top:531px;" width="14" height="13" viewBox="0 0 14 13"><circle cx="5.5" cy="5.5" r="4" fill="#777" stroke="#ddd"/><rect x="6" y="6" width="6" height="6" fill="#999" stroke="#ddd"/></svg><svg class="a" style="left:31px;top:531px;" width="14" height="13" viewBox="0 0 14 13"><circle cx="6" cy="6" r="4.5" fill="#777" stroke="#ddd"/><rect x="5" y="5" width="7" height="7" fill="none" stroke="#ddd"/></svg><svg class="a" style="left:51px;top:531px;" width="14" height="13" viewBox="0 0 14 13"><circle cx="6" cy="6" r="4" fill="#777" stroke="#ddd"/><rect x="6" y="6" width="5" height="5" fill="#555" stroke="#ddd"/></svg><svg class="a" style="left:24px;top:554px;" width="22" height="18" viewBox="0 0 22 18"><rect x="1.5" y="6.5" width="13" height="9" fill="#777" stroke="#ddd" stroke-width="1.1"/><rect x="7.5" y="1.5" width="13" height="9" fill="#888" stroke="#ddd" stroke-width="1.1"/></svg><div class="a" style="left:272px;top:224px;width:140px;height:54px;background:#474747;border:1px solid #2b2b2b"></div><div class="a" style="left:273px;top:225px;width:138px;height:13px;background:#2f2f2f;"></div><div class="a" style="left:375.0px;top:240px;width:1.1px;height:4px;background:#1c1c1c;"></div><div class="a" style="left:376.9px;top:240px;width:1.1px;height:4px;background:#1c1c1c;"></div><div class="a" style="left:378.8px;top:240px;width:1.1px;height:4px;background:#1c1c1c;"></div><div class="a" style="left:380.7px;top:240px;width:1.1px;height:4px;background:#1c1c1c;"></div><div class="a" style="left:382.6px;top:240px;width:1.1px;height:4px;background:#1c1c1c;"></div><div class="a" style="left:384.5px;top:240px;width:1.1px;height:4px;background:#1c1c1c;"></div><div class="a" style="left:386.4px;top:240px;width:1.1px;height:4px;background:#1c1c1c;"></div><div class="a" style="left:388.3px;top:240px;width:1.1px;height:4px;background:#1c1c1c;"></div><div class="a" style="left:390.2px;top:240px;width:1.1px;height:4px;background:#1c1c1c;"></div><div class="a" style="left:392.1px;top:240px;width:1.1px;height:4px;background:#1c1c1c;"></div><svg class="a" style="left:283px;top:251px;" width="19" height="19" viewBox="0 0 19 19"><path d="M1.5 2.5 H8 L9.5 4.5 H17.5 V17.5 H1.5Z" fill="none" stroke="#c8c8c8" stroke-width="1.1"/><path d="M5 9 Q6 6 8 8 M9 12 V6 Q10 4 12 6 M11 11 L14 7" stroke="#c8c8c8" stroke-width="1.2" fill="none"/><rect x="7" y="12" width="6" height="4" fill="#bbb"/></svg><div class="t" style="left:310.0px;top:254.27px;font-size:11.5px;line-height:11.5px;color:#dadada;transform:scaleX(0.889);transform-origin:0 0;font-weight:600;">Satz elegant geschwe</div><div class="a" style="left:412px;top:56px;width:231px;height:277px;background:rgba(0,0,0,0.35);filter:blur(2px)"></div><div class="a" style="left:410px;top:54px;width:231px;height:277px;background:#474747;border:1px solid #2a2a2a"></div><svg class="a" style="left:622px;top:57px;" width="16" height="11" viewBox="0 0 16 11"><path d="M0 4 L5 4 L2.5 7 Z" fill="#d8d8d8"/><rect x="6" y="1" width="9" height="1.4" fill="#d8d8d8"/><rect x="6" y="4.5" width="9" height="1.4" fill="#d8d8d8"/><rect x="6" y="8" width="9" height="1.4" fill="#d8d8d8"/></svg><div class="a" style="left:418px;top:72px;width:186px;height:23px;background:#535353;border:1px solid #2c2c2c;border-radius:1px"></div><svg class="a" style="left:437px;top:74px;" width="18" height="19" viewBox="0 0 18 19"><rect x="3" y="3" width="12" height="13" fill="none" stroke="#d0d0d0" stroke-width="1.2"/><circle cx="3" cy="3" r="1.8" fill="#d0d0d0"/><circle cx="15" cy="3" r="1.8" fill="#d0d0d0"/><circle cx="3" cy="16" r="1.8" fill="#d0d0d0"/><circle cx="15" cy="16" r="1.8" fill="#d0d0d0"/><path d="M5.5 5.5 H12.5 V7.5 M9 5.5 V13.5 M7 13.5 H11 M5.5 5.5 V7.5" stroke="#d0d0d0" stroke-width="1.1" fill="none"/></svg><div class="t" style="left:461.0px;top:77.69px;font-size:11px;line-height:11px;color:#d8d8d8;transform:scaleX(0.923);transform-origin:0 0;">Touch-Type-Textwerkzeug</div><div class="a" style="left:416px;top:101px;width:220px;height:21px;background:#474747;border:1px solid #d88a2a"></div><div class="a" style="left:417px;top:102px;width:200px;height:19px;background:#a9a9a9;"></div><svg class="a" style="left:420px;top:104px;" width="22" height="15" viewBox="0 0 22 15"><circle cx="9" cy="6" r="4.3" fill="none" stroke="#1a1a1a" stroke-width="1.2"/><path d="M6 9 L2 13.5" stroke="#1a1a1a" stroke-width="1.4"/><path d="M14 11 L18 11 L16 13.5 Z" fill="#1a1a1a"/></svg><div class="a" style="left:442px;top:105px;width:59px;height:12px;background:#3b8ee8;"></div><div class="t" style="left:443.0px;top:105.69px;font-size:11px;line-height:11px;color:#ffffff;transform:scaleX(0.871);transform-origin:0 0;">Modern Sans</div><div class="a" style="left:599px;top:105px;width:13px;height:13px;background:#575757;border-radius:2px"></div><svg class="a" style="left:601px;top:107px;" width="9" height="9" viewBox="0 0 9 9"><path d="M1.5 1.5 L7.5 7.5 M7.5 1.5 L1.5 7.5" stroke="#f0f0f0" stroke-width="1.5"/></svg><div class="a" style="left:616px;top:102px;width:19px;height:19px;background:#555555;border-left:1px solid #2a2a2a"></div><svg class="a" style="left:621.5px;top:107.5px;" width="8" height="8" viewBox="0 0 8 8"><path d="M0 2.0 L8 2.0 L4 6.0 Z" fill="#e8e8e8"/></svg><div class="a" style="left:417px;top:128px;width:218px;height:19px;background:#a9a9a9;border:1px solid #2a2a2a"></div><div class="t" style="left:421.0px;top:131.69px;font-size:11px;line-height:11px;color:#111;transform:scaleX(0.909);transform-origin:0 0;">Regular</div><div class="a" style="left:616px;top:128px;width:19px;height:19px;background:#5a5a5a;border:1px solid #262626"></div><svg class="a" style="left:621.5px;top:133.5px;" width="8" height="8" viewBox="0 0 8 8"><path d="M0 2.0 L8 2.0 L4 6.0 Z" fill="#e8e8e8"/></svg><div class="a" style="left:416px;top:153px;width:220px;height:1px;background:#393939;"></div><div class="a" style="left:416px;top:154px;width:220px;height:1px;background:#555;"></div><svg class="a" style="left:415px;top:160px;" width="20" height="20" viewBox="0 0 20 20"><path d="M2 6 H12 V8 M7 6 V18 M4 18 H10 M2 6 V8" stroke="#cfcfcf" stroke-width="1.6" fill="none"/><path d="M9 3 H18 V5 M13.5 3 V15 M11 15 H16" stroke="#cfcfcf" stroke-width="1.4" fill="none"/></svg><div class="a" style="left:438px;top:161px;width:18px;height:18px;background:#555;border:1px solid #262626"></div><div class="a" style="left:439px;top:170px;width:16px;height:1px;background:#2e2e2e;"></div><svg class="a" style="left:443.5px;top:163.0px;" width="7.0" height="7.0" viewBox="0 0 7.0 7.0"><path d="M0 5.25 L7.0 5.25 L3.5 1.75 Z" fill="#e8e8e8"/></svg><svg class="a" style="left:443.5px;top:171.0px;" width="7.0" height="7.0" viewBox="0 0 7.0 7.0"><path d="M0 1.75 L7.0 1.75 L3.5 5.25 Z" fill="#e8e8e8"/></svg><div class="a" style="left:455px;top:161px;width:48px;height:18px;background:#a9a9a9;border:1px solid #262626"></div><div class="t" style="left:458.0px;top:165.00px;font-size:10.5px;line-height:10.5px;color:#111;">10 pt</div><div class="a" style="left:502px;top:161px;width:16px;height:18px;background:#5a5a5a;border:1px solid #262626"></div><svg class="a" style="left:506.0px;top:166.0px;" width="8" height="8" viewBox="0 0 8 8"><path d="M0 2.0 L8 2.0 L4 6.0 Z" fill="#e8e8e8"/></svg><svg class="a" style="left:532px;top:160px;" width="20" height="20" viewBox="0 0 20 20"><path d="M11 2 L7 9 M11 2 L15 9 M8 7 H14 M11 11 L7 18 M11 11 L15 18 M8 16 H14 M3 8 V18 M1 10 L3 8 L5 10 M1 16 L3 18 L5 16" stroke="#cfcfcf" stroke-width="1.1" fill="none"/></svg><div class="a" style="left:555px;top:161px;width:18px;height:18px;background:#555;border:1px solid #262626"></div><div class="a" style="left:556px;top:170px;width:16px;height:1px;background:#2e2e2e;"></div><svg class="a" style="left:560.5px;top:163.0px;" width="7.0" height="7.0" viewBox="0 0 7.0 7.0"><path d="M0 5.25 L7.0 5.25 L3.5 1.75 Z" fill="#e8e8e8"/></svg><svg class="a" style="left:560.5px;top:171.0px;" width="7.0" height="7.0" viewBox="0 0 7.0 7.0"><path d="M0 1.75 L7.0 1.75 L3.5 5.25 Z" fill="#e8e8e8"/></svg><div class="a" style="left:572px;top:161px;width:47px;height:18px;background:#a9a9a9;border:1px solid #262626"></div><div class="t" style="left:575.0px;top:165.00px;font-size:10.5px;line-height:10.5px;color:#111;">(12 pt)</div><div class="a" style="left:618px;top:161px;width:17px;height:18px;background:#5a5a5a;border:1px solid #262626"></div><svg class="a" style="left:622.5px;top:166.0px;" width="8" height="8" viewBox="0 0 8 8"><path d="M0 2.0 L8 2.0 L4 6.0 Z" fill="#e8e8e8"/></svg><svg class="a" style="left:415px;top:187px;" width="20" height="20" viewBox="0 0 20 20"><path d="M1 4 L5 16 L9 4 M8 16 L12 4 M11 4 L15 16 M12 11 H16" stroke="#cfcfcf" stroke-width="1.5" fill="none"/><path d="M6 18 H16 M6 18 L8 16" stroke="#cfcfcf" stroke-width="1"/></svg><div class="a" style="left:438px;top:188px;width:18px;height:18px;background:#555;border:1px solid #262626"></div><div class="a" style="left:439px;top:197px;width:16px;height:1px;background:#2e2e2e;"></div><svg class="a" style="left:443.5px;top:190.0px;" width="7.0" height="7.0" viewBox="0 0 7.0 7.0"><path d="M0 5.25 L7.0 5.25 L3.5 1.75 Z" fill="#e8e8e8"/></svg><svg class="a" style="left:443.5px;top:198.0px;" width="7.0" height="7.0" viewBox="0 0 7.0 7.0"><path d="M0 1.75 L7.0 1.75 L3.5 5.25 Z" fill="#e8e8e8"/></svg><div class="a" style="left:455px;top:188px;width:48px;height:18px;background:#a9a9a9;border:1px solid #262626"></div><div class="t" style="left:458.0px;top:192.00px;font-size:10.5px;line-height:10.5px;color:#111;">Optisch</div><div class="a" style="left:502px;top:188px;width:16px;height:18px;background:#5a5a5a;border:1px solid #262626"></div><svg class="a" style="left:506.0px;top:193.0px;" width="8" height="8" viewBox="0 0 8 8"><path d="M0 2.0 L8 2.0 L4 6.0 Z" fill="#e8e8e8"/></svg><svg class="a" style="left:532px;top:187px;" width="20" height="20" viewBox="0 0 20 20"><path d="M2 3 L6 13 L10 3 M9 13 L13 3 L17 13 M10.5 9 H15.5 M1 1.5 H18" stroke="#cfcfcf" stroke-width="1.5" fill="none"/><path d="M1 17 H18 M3 15 L1 17 L3 19 M16 15 L18 17 L16 19" stroke="#cfcfcf" stroke-width="1" fill="none"/></svg><div class="a" style="left:555px;top:188px;width:18px;height:18px;background:#555;border:1px solid #262626"></div><div class="a" style="left:556px;top:197px;width:16px;height:1px;background:#2e2e2e;"></div><svg class="a" style="left:560.5px;top:190.0px;" width="7.0" height="7.0" viewBox="0 0 7.0 7.0"><path d="M0 5.25 L7.0 5.25 L3.5 1.75 Z" fill="#e8e8e8"/></svg><svg class="a" style="left:560.5px;top:198.0px;" width="7.0" height="7.0" viewBox="0 0 7.0 7.0"><path d="M0 1.75 L7.0 1.75 L3.5 5.25 Z" fill="#e8e8e8"/></svg><div class="a" style="left:572px;top:188px;width:47px;height:18px;background:#a9a9a9;border:1px solid #262626"></div><div class="a" style="left:618px;top:188px;width:17px;height:18px;background:#5a5a5a;border:1px solid #262626"></div><svg class="a" style="left:622.5px;top:193.0px;" width="8" height="8" viewBox="0 0 8 8"><path d="M0 2.0 L8 2.0 L4 6.0 Z" fill="#e8e8e8"/></svg><div class="a" style="left:416px;top:212px;width:220px;height:1px;background:#393939;"></div><div class="a" style="left:416px;top:213px;width:220px;height:1px;background:#555;"></div><svg class="a" style="left:415px;top:219px;" width="20" height="20" viewBox="0 0 20 20"><path d="M6 3 H17 V5 M11.5 3 V17 M9 17 H14 M6 3 V5" stroke="#cfcfcf" stroke-width="1.6" fill="none"/><path d="M3 2 V18 M1 4 L3 2 L5 4 M1 16 L3 18 L5 16" stroke="#cfcfcf" stroke-width="1.1" fill="none"/></svg><div class="a" style="left:438px;top:220px;width:18px;height:18px;background:#555;border:1px solid #262626"></div><div class="a" style="left:439px;top:229px;width:16px;height:1px;background:#2e2e2e;"></div><svg class="a" style="left:443.5px;top:222.0px;" width="7.0" height="7.0" viewBox="0 0 7.0 7.0"><path d="M0 5.25 L7.0 5.25 L3.5 1.75 Z" fill="#e8e8e8"/></svg><svg class="a" style="left:443.5px;top:230.0px;" width="7.0" height="7.0" viewBox="0 0 7.0 7.0"><path d="M0 1.75 L7.0 1.75 L3.5 5.25 Z" fill="#e8e8e8"/></svg><div class="a" style="left:455px;top:220px;width:48px;height:18px;background:#a9a9a9;border:1px solid #262626"></div><div class="t" style="left:458.0px;top:224.00px;font-size:10.5px;line-height:10.5px;color:#111;">100%</div><div class="a" style="left:502px;top:220px;width:16px;height:18px;background:#5a5a5a;border:1px solid #262626"></div><svg class="a" style="left:506.0px;top:225.0px;" width="8" height="8" viewBox="0 0 8 8"><path d="M0 2.0 L8 2.0 L4 6.0 Z" fill="#e8e8e8"/></svg><svg class="a" style="left:532px;top:219px;" width="20" height="20" viewBox="0 0 20 20"><path d="M3 2 H17 V4 M10 2 V14 M7 14 H13 M3 2 V4" stroke="#cfcfcf" stroke-width="1.6" fill="none"/><path d="M1 18 H19 M3 16 L1 18 L3 20 M17 16 L19 18 L17 20" stroke="#cfcfcf" stroke-width="1" fill="none"/></svg><div class="a" style="left:555px;top:220px;width:18px;height:18px;background:#555;border:1px solid #262626"></div><div class="a" style="left:556px;top:229px;width:16px;height:1px;background:#2e2e2e;"></div><svg class="a" style="left:560.5px;top:222.0px;" width="7.0" height="7.0" viewBox="0 0 7.0 7.0"><path d="M0 5.25 L7.0 5.25 L3.5 1.75 Z" fill="#e8e8e8"/></svg><svg class="a" style="left:560.5px;top:230.0px;" width="7.0" height="7.0" viewBox="0 0 7.0 7.0"><path d="M0 1.75 L7.0 1.75 L3.5 5.25 Z" fill="#e8e8e8"/></svg><div class="a" style="left:572px;top:220px;width:47px;height:18px;background:#a9a9a9;border:1px solid #262626"></div><div class="t" style="left:575.0px;top:224.00px;font-size:10.5px;line-height:10.5px;color:#111;">100%</div><div class="a" style="left:618px;top:220px;width:17px;height:18px;background:#5a5a5a;border:1px solid #262626"></div><svg class="a" style="left:622.5px;top:225.0px;" width="8" height="8" viewBox="0 0 8 8"><path d="M0 2.0 L8 2.0 L4 6.0 Z" fill="#e8e8e8"/></svg><svg class="a" style="left:415px;top:246px;" width="20" height="20" viewBox="0 0 20 20"><path d="M1 12 L5 2 L9 12 M2.5 8.5 H7.5 M1 15 H10" stroke="#cfcfcf" stroke-width="1.3" fill="none"/><path d="M12 5 Q12 3 14 3 Q16 3 16 5 V9 M16 6 Q12 6 12 8 Q12 9 14 9 Q16 9 16 7" stroke="#cfcfcf" stroke-width="1" fill="none"/><path d="M14 12 V18 M12.5 13.5 L14 12 L15.5 13.5" stroke="#cfcfcf" stroke-width="1"/></svg><div class="a" style="left:438px;top:247px;width:18px;height:18px;background:#555;border:1px solid #262626"></div><div class="a" style="left:439px;top:256px;width:16px;height:1px;background:#2e2e2e;"></div><svg class="a" style="left:443.5px;top:249.0px;" width="7.0" height="7.0" viewBox="0 0 7.0 7.0"><path d="M0 5.25 L7.0 5.25 L3.5 1.75 Z" fill="#e8e8e8"/></svg><svg class="a" style="left:443.5px;top:257.0px;" width="7.0" height="7.0" viewBox="0 0 7.0 7.0"><path d="M0 1.75 L7.0 1.75 L3.5 5.25 Z" fill="#e8e8e8"/></svg><div class="a" style="left:455px;top:247px;width:48px;height:18px;background:#a9a9a9;border:1px solid #262626"></div><div class="t" style="left:458.0px;top:251.00px;font-size:10.5px;line-height:10.5px;color:#111;">0 pt</div><div class="a" style="left:502px;top:247px;width:16px;height:18px;background:#5a5a5a;border:1px solid #262626"></div><svg class="a" style="left:506.0px;top:252.0px;" width="8" height="8" viewBox="0 0 8 8"><path d="M0 2.0 L8 2.0 L4 6.0 Z" fill="#e8e8e8"/></svg><svg class="a" style="left:532px;top:246px;" width="20" height="20" viewBox="0 0 20 20"><circle cx="10" cy="10" r="7.5" fill="none" stroke="#cfcfcf" stroke-width="1.2"/><path d="M6 6.5 H14 V8 M10 6.5 V14 M8 14 H12" stroke="#cfcfcf" stroke-width="1.3" fill="none"/><path d="M14 1 L17 3 L14 5" fill="none" stroke="#cfcfcf"/></svg><div class="a" style="left:555px;top:247px;width:18px;height:18px;background:#555;border:1px solid #262626"></div><div class="a" style="left:556px;top:256px;width:16px;height:1px;background:#2e2e2e;"></div><svg class="a" style="left:560.5px;top:249.0px;" width="7.0" height="7.0" viewBox="0 0 7.0 7.0"><path d="M0 5.25 L7.0 5.25 L3.5 1.75 Z" fill="#e8e8e8"/></svg><svg class="a" style="left:560.5px;top:257.0px;" width="7.0" height="7.0" viewBox="0 0 7.0 7.0"><path d="M0 1.75 L7.0 1.75 L3.5 5.25 Z" fill="#e8e8e8"/></svg><div class="a" style="left:572px;top:247px;width:47px;height:18px;background:#a9a9a9;border:1px solid #262626"></div><div class="t" style="left:575.0px;top:251.00px;font-size:10.5px;line-height:10.5px;color:#111;">0°</div><div class="a" style="left:618px;top:247px;width:17px;height:18px;background:#5a5a5a;border:1px solid #262626"></div><svg class="a" style="left:622.5px;top:252.0px;" width="8" height="8" viewBox="0 0 8 8"><path d="M0 2.0 L8 2.0 L4 6.0 Z" fill="#e8e8e8"/></svg><div class="a" style="left:417px;top:275px;width:24px;height:21px;background:#2e2e2e;"></div><svg class="a" style="left:418px;top:277px;" width="22" height="17" viewBox="0 0 22 17"><text x="1" y="14" font-family="Liberation Serif" font-size="14" fill="#cfcfcf">TT</text></svg><svg class="a" style="left:450px;top:277px;" width="22" height="17" viewBox="0 0 22 17"><text x="1" y="14" font-family="Liberation Serif" font-size="14" fill="#cfcfcf">T</text><text x="10" y="14" font-family="Liberation Serif" font-size="10" fill="#cfcfcf">T</text></svg><svg class="a" style="left:502px;top:277px;" width="22" height="17" viewBox="0 0 22 17"><text x="1" y="14" font-family="Liberation Serif" font-size="14" fill="#cfcfcf">T</text><text x="11" y="7" font-family="Liberation Serif" font-size="7" fill="#cfcfcf">1</text></svg><svg class="a" style="left:532px;top:277px;" width="22" height="17" viewBox="0 0 22 17"><text x="1" y="14" font-family="Liberation Serif" font-size="14" fill="#cfcfcf">T</text><text x="11" y="16" font-family="Liberation Serif" font-size="7" fill="#cfcfcf">1</text></svg><svg class="a" style="left:586px;top:277px;" width="22" height="17" viewBox="0 0 22 17"><text x="3" y="13" font-family="Liberation Serif" font-size="14" fill="#cfcfcf">T</text><rect x="3" y="15" width="11" height="1" fill="#cfcfcf"/></svg><svg class="a" style="left:615px;top:277px;" width="22" height="17" viewBox="0 0 22 17"><text x="3" y="14" font-family="Liberation Serif" font-size="14" fill="#cfcfcf">T</text><rect x="2" y="8" width="13" height="1.2" fill="#cfcfcf"/></svg><div class="a" style="left:416px;top:297px;width:220px;height:1px;background:#393939;"></div><div class="a" style="left:416px;top:298px;width:220px;height:1px;background:#555;"></div><div class="a" style="left:417px;top:305px;width:101px;height:18px;background:#575757;border:1px solid #2a2a2a"></div><div class="a" style="left:500px;top:306px;width:1px;height:16px;background:#3a3a3a;"></div><div class="t" style="left:423.0px;top:309.11px;font-size:10.5px;line-height:10.5px;color:#d8d8d8;transform:scaleX(0.979);transform-origin:0 0;">Deutsch: Ref...</div><svg class="a" style="left:505px;top:310px;" width="8" height="8" viewBox="0 0 8 8"><path d="M0 2.0 L8 2.0 L4 6.0 Z" fill="#e8e8e8"/></svg><svg class="a" style="left:531px;top:306px;" width="18" height="16" viewBox="0 0 18 16"><text x="0" y="11" font-family="Liberation Sans" font-size="11" fill="#cfcfcf">a</text><text x="7" y="14" font-family="Liberation Sans" font-size="12" fill="#cfcfcf">a</text></svg><div class="a" style="left:555px;top:305px;width:80px;height:18px;background:#575757;border:1px solid #2a2a2a"></div><div class="a" style="left:616px;top:306px;width:1px;height:16px;background:#3a3a3a;"></div><div class="t" style="left:562.0px;top:309.11px;font-size:10.5px;line-height:10.5px;color:#d8d8d8;transform:scaleX(0.989);transform-origin:0 0;">Scharf</div><svg class="a" style="left:622px;top:310px;" width="8" height="8" viewBox="0 0 8 8"><path d="M0 2.0 L8 2.0 L4 6.0 Z" fill="#e8e8e8"/></svg><div class="a" style="left:626px;top:71px;width:110px;height:20px;background:rgba(0,0,0,0.3);filter:blur(1.5px)"></div><div class="a" style="left:624px;top:69px;width:110px;height:20px;background:#f4f4f4;border:1px solid #9a9a9a"></div><div class="t" style="left:630.0px;top:73.27px;font-size:11.5px;line-height:11.5px;color:#333;transform:scaleX(1.032);transform-origin:0 0;">Zeichenbedienfeld</div><div class="a" style="left:134px;top:752px;width:232px;height:242px;background:#474747;border:1px solid #2a2a2a;border-radius:3px 3px 0 0"></div><div class="a" style="left:135px;top:753px;width:230px;height:13px;background:#2f2f2f;border-radius:3px 3px 0 0"></div><svg class="a" style="left:336px;top:755px;" width="11" height="8" viewBox="0 0 11 8"><path d="M5 0.5 L0.5 4 L5 7.5Z M10.5 0.5 L6 4 L10.5 7.5Z" fill="#cfcfcf"/></svg><svg class="a" style="left:352px;top:755px;" width="8" height="8" viewBox="0 0 8 8"><path d="M1 1 L7 7 M7 1 L1 7" stroke="#dcdcdc" stroke-width="1.5"/></svg><div class="a" style="left:135px;top:766px;width:230px;height:17px;background:#353535;"></div><div class="a" style="left:135px;top:766px;width:91px;height:17px;background:#474747;"></div><div class="a" style="left:226px;top:766px;width:1px;height:17px;background:#2a2a2a;"></div><div class="a" style="left:290px;top:766px;width:1px;height:17px;background:#2a2a2a;"></div><svg class="a" style="left:139px;top:771px;" width="7" height="11" viewBox="0 0 7 11"><path d="M0.8 4.5 L3.5 1.5 L6.2 4.5 M0.8 6.5 L3.5 9.5 L6.2 6.5" fill="none" stroke="#d0d0d0" stroke-width="1.1"/></svg><div class="t" style="left:148.0px;top:769.11px;font-size:10.5px;line-height:10.5px;color:#e6e6e6;font-weight:bold;transform:scaleX(0.916);transform-origin:0 0;">Transformieren</div><div class="t" style="left:233.0px;top:769.11px;font-size:10.5px;line-height:10.5px;color:#a6a6a6;font-weight:bold;transform:scaleX(0.912);transform-origin:0 0;">Ausrichten</div><svg class="a" style="left:347px;top:769px;" width="16" height="11" viewBox="0 0 16 11"><path d="M0 4 L5 4 L2.5 7 Z" fill="#d8d8d8"/><rect x="6" y="1" width="9" height="1.4" fill="#d8d8d8"/><rect x="6" y="4.5" width="9" height="1.4" fill="#d8d8d8"/><rect x="6" y="8" width="9" height="1.4" fill="#d8d8d8"/></svg><svg class="a" style="left:140px;top:802px;" width="20" height="20" viewBox="0 0 20 20"><rect x="1.0" y="1.0" width="4.5" height="4.5" fill="none" stroke="#dcdcdc" stroke-width="1"/><rect x="7.5" y="1.0" width="4.5" height="4.5" fill="#dcdcdc" stroke="#dcdcdc" stroke-width="1"/><rect x="14.0" y="1.0" width="4.5" height="4.5" fill="none" stroke="#dcdcdc" stroke-width="1"/><rect x="1.0" y="7.5" width="4.5" height="4.5" fill="none" stroke="#dcdcdc" stroke-width="1"/><rect x="7.5" y="7.5" width="4.5" height="4.5" fill="none" stroke="#dcdcdc" stroke-width="1"/><rect x="14.0" y="7.5" width="4.5" height="4.5" fill="none" stroke="#dcdcdc" stroke-width="1"/><rect x="1.0" y="14.0" width="4.5" height="4.5" fill="none" stroke="#dcdcdc" stroke-width="1"/><rect x="7.5" y="14.0" width="4.5" height="4.5" fill="none" stroke="#dcdcdc" stroke-width="1"/><rect x="14.0" y="14.0" width="4.5" height="4.5" fill="none" stroke="#dcdcdc" stroke-width="1"/><path d="M5.5 3.2 H7.5 M12 3.2 H14 M5.5 9.7 H7.5 M12 9.7 H14 M5.5 16.2 H7.5 M12 16.2 H14 M3.2 5.5 V7.5 M3.2 12 V14 M9.7 5.5 V7.5 M9.7 12 V14 M16.2 5.5 V7.5 M16.2 12 V14" stroke="#dcdcdc" stroke-width="0.8"/></svg><div class="t" style="left:173.0px;top:793.69px;font-size:11px;line-height:11px;color:#dcdcdc;font-weight:bold;transform:scaleX(0.818);transform-origin:0 0;">x:</div><div class="a" style="left:187px;top:791px;width:56px;height:18px;background:#a7a7a7;border:1px solid #262626"></div><div class="t" style="left:191.0px;top:795.00px;font-size:10.5px;line-height:10.5px;color:#111;transform:scaleX(0.906);transform-origin:0 0;">27,5 mm</div><div class="t" style="left:250.0px;top:793.69px;font-size:11px;line-height:11px;color:#dcdcdc;font-weight:bold;transform:scaleX(0.775);transform-origin:0 0;">B:</div><div class="a" style="left:266px;top:791px;width:56px;height:18px;background:#a7a7a7;border:1px solid #262626"></div><div class="t" style="left:270.0px;top:795.00px;font-size:10.5px;line-height:10.5px;color:#111;transform:scaleX(0.876);transform-origin:0 0;">36,302 mm</div><div class="t" style="left:173.0px;top:819.69px;font-size:11px;line-height:11px;color:#dcdcdc;font-weight:bold;transform:scaleX(0.818);transform-origin:0 0;">y:</div><div class="a" style="left:187px;top:817px;width:56px;height:18px;background:#a7a7a7;border:1px solid #262626"></div><div class="t" style="left:191.0px;top:821.00px;font-size:10.5px;line-height:10.5px;color:#111;transform:scaleX(0.876);transform-origin:0 0;">48,207 mm</div><div class="t" style="left:250.0px;top:819.69px;font-size:11px;line-height:11px;color:#dcdcdc;font-weight:bold;transform:scaleX(0.775);transform-origin:0 0;">H:</div><div class="a" style="left:266px;top:817px;width:56px;height:18px;background:#a7a7a7;border:1px solid #262626"></div><div class="t" style="left:270.0px;top:821.00px;font-size:10.5px;line-height:10.5px;color:#111;transform:scaleX(0.900);transform-origin:0 0;">3,842 mm</div><svg class="a" style="left:331px;top:805px;" width="17" height="15" viewBox="0 0 17 15"><rect x="5.5" y="2.5" width="6" height="10" rx="3" fill="none" stroke="#dcdcdc" stroke-width="1.8"/><path d="M1 7.5 H4 M13 7.5 H16 M2 3 L4 4.5 M15 3 L13 4.5 M2 12 L4 10.5 M15 12 L13 10.5" stroke="#dcdcdc" stroke-width="0.9"/></svg><svg class="a" style="left:167px;top:845px;" width="17" height="12" viewBox="0 0 17 12"><path d="M1 10.5 H15 L10 2 Z" fill="none" stroke="#d0d0d0" stroke-width="1"/><path d="M6 10.5 Q6 7.5 8 6.5" fill="none" stroke="#d0d0d0"/></svg><div class="t" style="left:181.0px;top:845.69px;font-size:11px;line-height:11px;color:#d0d0d0;font-weight:bold;">:</div><div class="a" style="left:187px;top:843px;width:40px;height:18px;background:#a7a7a7;border:1px solid #262626"></div><div class="t" style="left:190.0px;top:847.00px;font-size:10.5px;line-height:10.5px;color:#111;">0°</div><div class="a" style="left:226px;top:843px;width:16px;height:18px;background:#5a5a5a;border:1px solid #262626"></div><svg class="a" style="left:230.0px;top:848.0px;" width="8" height="8" viewBox="0 0 8 8"><path d="M0 2.0 L8 2.0 L4 6.0 Z" fill="#e8e8e8"/></svg><svg class="a" style="left:248px;top:845px;" width="17" height="12" viewBox="0 0 17 12"><path d="M2 10.5 L6 1.5 H15 L11 10.5Z" fill="none" stroke="#d0d0d0" stroke-width="1"/></svg><div class="t" style="left:262.0px;top:845.69px;font-size:11px;line-height:11px;color:#d0d0d0;font-weight:bold;">:</div><div class="a" style="left:268px;top:843px;width:39px;height:18px;background:#a7a7a7;border:1px solid #262626"></div><div class="t" style="left:271.0px;top:847.00px;font-size:10.5px;line-height:10.5px;color:#111;">0°</div><div class="a" style="left:306px;top:843px;width:16px;height:18px;background:#5a5a5a;border:1px solid #262626"></div><svg class="a" style="left:310.0px;top:848.0px;" width="8" height="8" viewBox="0 0 8 8"><path d="M0 2.0 L8 2.0 L4 6.0 Z" fill="#e8e8e8"/></svg><div class="a" style="left:135px;top:866px;width:230px;height:4px;background:#2f2f2f;"></div><div class="a" style="left:135px;top:870px;width:230px;height:16px;background:#353535;"></div><div class="a" style="left:135px;top:870px;width:64px;height:16px;background:#474747;"></div><div class="a" style="left:199px;top:870px;width:1px;height:16px;background:#2a2a2a;"></div><div class="t" style="left:142.0px;top:872.61px;font-size:10.5px;line-height:10.5px;color:#e6e6e6;font-weight:bold;transform:scaleX(0.944);transform-origin:0 0;">Pathfinder</div><svg class="a" style="left:347px;top:873px;" width="16" height="11" viewBox="0 0 16 11"><path d="M0 4 L5 4 L2.5 7 Z" fill="#d8d8d8"/><rect x="6" y="1" width="9" height="1.4" fill="#d8d8d8"/><rect x="6" y="4.5" width="9" height="1.4" fill="#d8d8d8"/><rect x="6" y="8" width="9" height="1.4" fill="#d8d8d8"/></svg><div class="t" style="left:140.0px;top:893.61px;font-size:10.5px;line-height:10.5px;color:#dcdcdc;font-weight:bold;transform:scaleX(0.839);transform-origin:0 0;">Formmodi:</div><svg class="a" style="left:143.5px;top:915.5px;" width="18" height="18" viewBox="0 0 18 18"><rect x="2" y="2" width="9" height="9" fill="#8a8a8a" stroke="#cfcfcf"/><rect x="6" y="6" width="10" height="10" fill="#8a8a8a" stroke="#cfcfcf"/><rect x="6" y="6" width="5" height="5" fill="#8a8a8a"/></svg><svg class="a" style="left:175.5px;top:915.5px;" width="18" height="18" viewBox="0 0 18 18"><rect x="2" y="2" width="9" height="9" fill="#8a8a8a" stroke="#cfcfcf"/><rect x="6" y="6" width="10" height="10" fill="none" stroke="#777"/></svg><svg class="a" style="left:207.3px;top:915.5px;" width="18" height="18" viewBox="0 0 18 18"><rect x="2" y="2" width="10" height="10" fill="none" stroke="#cfcfcf"/><rect x="6" y="6" width="10" height="10" fill="none" stroke="#cfcfcf"/><rect x="6" y="6" width="6" height="6" fill="#9a9a9a"/></svg><svg class="a" style="left:240.3px;top:915.5px;" width="18" height="18" viewBox="0 0 18 18"><rect x="2" y="2" width="10" height="10" fill="#8a8a8a" stroke="#cfcfcf"/><rect x="6" y="6" width="10" height="10" fill="#8a8a8a" stroke="#cfcfcf"/><rect x="6.5" y="6.5" width="5" height="5" fill="#474747"/></svg><div class="a" style="left:271px;top:915px;width:87px;height:18px;background:#4d4d4d;border:1px solid #3a3a3a"></div><div class="t" style="left:288.0px;top:919.11px;font-size:10.5px;line-height:10.5px;color:#8a8a8a;transform:scaleX(0.902);transform-origin:0 0;">Umwandeln</div><div class="t" style="left:140.0px;top:943.61px;font-size:10.5px;line-height:10.5px;color:#dcdcdc;font-weight:bold;transform:scaleX(0.938);transform-origin:0 0;">Pathfinder:</div><svg class="a" style="left:146.8px;top:965.5px;" width="18" height="18" viewBox="0 0 18 18"><rect x="2" y="2" width="8" height="8" fill="none" stroke="#cfcfcf"/><rect x="5" y="5" width="8" height="8" fill="none" stroke="#cfcfcf"/><rect x="8" y="8" width="8" height="8" fill="none" stroke="#cfcfcf"/></svg><svg class="a" style="left:183.5px;top:965.5px;" width="18" height="18" viewBox="0 0 18 18"><rect x="2" y="2" width="9" height="9" fill="#cfcfcf"/><rect x="7" y="7" width="9" height="9" fill="#aaa"/><rect x="7" y="7" width="4" height="4" fill="#555"/></svg><svg class="a" style="left:221px;top:965.5px;" width="18" height="18" viewBox="0 0 18 18"><rect x="2" y="2" width="10" height="10" fill="#cfcfcf"/><rect x="6" y="6" width="10" height="10" fill="#aaa"/></svg><svg class="a" style="left:257.8px;top:965.5px;" width="18" height="18" viewBox="0 0 18 18"><rect x="2" y="3" width="14" height="12" fill="#5a5a5a"/><rect x="6" y="6" width="6" height="6" fill="#cfcfcf"/></svg><svg class="a" style="left:295.3px;top:965.5px;" width="18" height="18" viewBox="0 0 18 18"><rect x="2" y="2" width="9" height="9" fill="none" stroke="#cfcfcf"/><rect x="7" y="7" width="9" height="9" fill="none" stroke="#cfcfcf"/><rect x="6" y="6" width="5" height="5" fill="none" stroke="#cfcfcf"/></svg><svg class="a" style="left:333px;top:965.5px;" width="18" height="18" viewBox="0 0 18 18"><rect x="2" y="2" width="10" height="10" fill="#555" stroke="#888"/><rect x="6" y="6" width="10" height="10" fill="none" stroke="#cfcfcf"/></svg><svg class="a" style="left:1642px;top:67px;" width="12" height="9" viewBox="0 0 12 9"><path d="M5.5 0.5 L0.5 4.5 L5.5 8.5Z M11 0.5 L6 4.5 L11 8.5Z" fill="#cfcfcf"/></svg><svg class="a" style="left:1908px;top:67px;" width="12" height="9" viewBox="0 0 12 9"><path d="M0.5 0.5 L5.5 4.5 L0.5 8.5Z M6 0.5 L11 4.5 L6 8.5Z" fill="#cfcfcf"/></svg><div class="a" style="left:1627.0px;top:80px;width:1.1px;height:4px;background:#1c1c1c;"></div><div class="a" style="left:1628.9px;top:80px;width:1.1px;height:4px;background:#1c1c1c;"></div><div class="a" style="left:1630.8px;top:80px;width:1.1px;height:4px;background:#1c1c1c;"></div><div class="a" style="left:1632.7px;top:80px;width:1.1px;height:4px;background:#1c1c1c;"></div><div class="a" style="left:1634.6px;top:80px;width:1.1px;height:4px;background:#1c1c1c;"></div><div class="a" style="left:1636.5px;top:80px;width:1.1px;height:4px;background:#1c1c1c;"></div><div class="a" style="left:1638.4px;top:80px;width:1.1px;height:4px;background:#1c1c1c;"></div><div class="a" style="left:1640.3px;top:80px;width:1.1px;height:4px;background:#1c1c1c;"></div><div class="a" style="left:1642.2px;top:80px;width:1.1px;height:4px;background:#1c1c1c;"></div><div class="a" style="left:1644.1px;top:80px;width:1.1px;height:4px;background:#1c1c1c;"></div><svg class="a" style="left:1628px;top:91px;" width="20" height="18" viewBox="0 0 20 18"><path d="M10 8 L18 12 L10 16 L2 12Z" fill="#cfcfcf"/><path d="M10 2 L18 6.5 L10 11 L2 6.5Z" fill="#d8d8d8" stroke="#474747" stroke-width="1"/></svg><div class="a" style="left:1617px;top:117px;width:38px;height:1px;background:#2b2b2b;"></div><div class="a" style="left:1658px;top:77px;width:262px;height:17px;background:#353535;"></div><div class="a" style="left:1658px;top:77px;width:62px;height:17px;background:#474747;"></div><svg class="a" style="left:1901px;top:80.5px;" width="16" height="11" viewBox="0 0 16 11"><path d="M0 4 L5 4 L2.5 7 Z" fill="#d8d8d8"/><rect x="6" y="1" width="9" height="1.4" fill="#d8d8d8"/><rect x="6" y="4.5" width="9" height="1.4" fill="#d8d8d8"/><rect x="6" y="8" width="9" height="1.4" fill="#d8d8d8"/></svg><div class="a" style="left:1720px;top:77px;width:1px;height:17px;background:#2a2a2a;"></div><div class="a" style="left:1760px;top:77px;width:1px;height:17px;background:#2a2a2a;"></div><svg class="a" style="left:1663px;top:80px;" width="7" height="11" viewBox="0 0 7 11"><path d="M0.8 4.5 L3.5 1.5 L6.2 4.5 M0.8 6.5 L3.5 9.5 L6.2 6.5" fill="none" stroke="#d0d0d0" stroke-width="1.1"/></svg><div class="t" style="left:1671.0px;top:80.11px;font-size:10.5px;line-height:10.5px;color:#e6e6e6;font-weight:bold;transform:scaleX(0.947);transform-origin:0 0;">Farbhilfe</div><div class="t" style="left:1727.0px;top:80.11px;font-size:10.5px;line-height:10.5px;color:#9a9a9a;font-weight:bold;transform:scaleX(0.931);transform-origin:0 0;">Kuler</div><div class="a" style="left:1663px;top:102px;width:21px;height:21px;background:#ffffff;border:1px solid #000;box-shadow:inset 0 0 0 2px #fff, inset 0 0 0 3px #111"></div><div class="a" style="left:1665px;top:104px;width:17px;height:17px;background:#fff;border:1px solid #111"></div><div class="a" style="left:1690px;top:102px;width:208px;height:22px;background:#e0e0e0;border:1px solid #2a2a2a"></div><div class="a" style="left:1693px;top:104px;width:17px;height:17px;background:#fff;border:1px solid #111"></div><div class="a" style="left:1710px;top:104px;width:16px;height:17px;background:#b0a7a4;"></div><div class="a" style="left:1726px;top:104px;width:16px;height:17px;background:#b5b1a8;"></div><div class="a" style="left:1742px;top:104px;width:16px;height:17px;background:#c9d8c6;"></div><div class="a" style="left:1758px;top:104px;width:16px;height:17px;background:#9191b6;"></div><div class="a" style="left:1693px;top:104px;width:81px;height:17px;background:transparent;border:1px solid #111"></div><div class="a" style="left:1897px;top:102px;width:16px;height:22px;background:#555;border:1px solid #2a2a2a"></div><svg class="a" style="left:1901px;top:109px;" width="8" height="8" viewBox="0 0 8 8"><path d="M0 2.0 L8 2.0 L4 6.0 Z" fill="#e8e8e8"/></svg><div class="t" style="left:1680.5px;top:131.69px;font-size:11px;line-height:11px;color:#d8d8d8;font-weight:bold;transform:scaleX(0.937);transform-origin:0 0;">Schattierungen</div><svg class="a" style="left:1784.5px;top:136.5px;" width="7.0" height="7.0" viewBox="0 0 7.0 7.0"><path d="M0 1.75 L7.0 1.75 L3.5 5.25 Z" fill="#e8e8e8"/></svg><div class="t" style="left:1847.5px;top:131.69px;font-size:11px;line-height:11px;color:#d8d8d8;font-weight:bold;transform:scaleX(0.935);transform-origin:0 0;">Farbtöne</div><div class="a" style="left:1663px;top:150px;width:251px;height:76px;background:#222;"></div><div class="a" style="left:1664px;top:150.5px;width:25px;height:14px;background:#1b1b1b;"></div><div class="a" style="left:1690.0px;top:150.5px;width:25.4px;height:14px;background:#6a6a6a;"></div><div class="a" style="left:1716.4px;top:150.5px;width:25.4px;height:14px;background:#a0a0a0;"></div><div class="a" style="left:1742.8px;top:150.5px;width:25.4px;height:14px;background:#d0d0d0;"></div><div class="a" style="left:1769.2px;top:150.5px;width:25.4px;height:14px;background:#ffffff;"></div><div class="a" style="left:1795.6px;top:150.5px;width:25.4px;height:14px;background:#ffffff;"></div><div class="a" style="left:1822.0px;top:150.5px;width:25.4px;height:14px;background:#ffffff;"></div><div class="a" style="left:1848.4px;top:150.5px;width:25.4px;height:14px;background:#ffffff;"></div><div class="a" style="left:1874.8px;top:150.5px;width:25.4px;height:14px;background:#ffffff;"></div><div class="a" style="left:1901px;top:150.5px;width:12px;height:14px;background:#3a3a3a;"></div><div class="a" style="left:1664px;top:165.5px;width:25px;height:14px;background:#1b1b1b;"></div><div class="a" style="left:1690.0px;top:165.5px;width:25.4px;height:14px;background:#575757;"></div><div class="a" style="left:1716.4px;top:165.5px;width:25.4px;height:14px;background:#8a8686;"></div><div class="a" style="left:1742.8px;top:165.5px;width:25.4px;height:14px;background:#a89b99;"></div><div class="a" style="left:1769.2px;top:165.5px;width:25.4px;height:14px;background:#b5a7a4;"></div><div class="a" style="left:1795.6px;top:165.5px;width:25.4px;height:14px;background:#bfb0ae;"></div><div class="a" style="left:1822.0px;top:165.5px;width:25.4px;height:14px;background:#cfc3c1;"></div><div class="a" style="left:1848.4px;top:165.5px;width:25.4px;height:14px;background:#ddd4d3;"></div><div class="a" style="left:1874.8px;top:165.5px;width:25.4px;height:14px;background:#ece8e7;"></div><div class="a" style="left:1901px;top:165.5px;width:12px;height:14px;background:#3a3a3a;"></div><div class="a" style="left:1664px;top:180.5px;width:25px;height:14px;background:#1b1b1b;"></div><div class="a" style="left:1690.0px;top:180.5px;width:25.4px;height:14px;background:#5b5b5b;"></div><div class="a" style="left:1716.4px;top:180.5px;width:25.4px;height:14px;background:#969490;"></div><div class="a" style="left:1742.8px;top:180.5px;width:25.4px;height:14px;background:#aaa59e;"></div><div class="a" style="left:1769.2px;top:180.5px;width:25.4px;height:14px;background:#b9b3a9;"></div><div class="a" style="left:1795.6px;top:180.5px;width:25.4px;height:14px;background:#c8c1b6;"></div><div class="a" style="left:1822.0px;top:180.5px;width:25.4px;height:14px;background:#d6d1c7;"></div><div class="a" style="left:1848.4px;top:180.5px;width:25.4px;height:14px;background:#e1ded8;"></div><div class="a" style="left:1874.8px;top:180.5px;width:25.4px;height:14px;background:#efeeea;"></div><div class="a" style="left:1901px;top:180.5px;width:12px;height:14px;background:#3a3a3a;"></div><div class="a" style="left:1664px;top:195.5px;width:25px;height:14px;background:#1b1b1b;"></div><div class="a" style="left:1690.0px;top:195.5px;width:25.4px;height:14px;background:#5e5e5e;"></div><div class="a" style="left:1716.4px;top:195.5px;width:25.4px;height:14px;background:#919b96;"></div><div class="a" style="left:1742.8px;top:195.5px;width:25.4px;height:14px;background:#a9c1b1;"></div><div class="a" style="left:1769.2px;top:195.5px;width:25.4px;height:14px;background:#c2dac3;"></div><div class="a" style="left:1795.6px;top:195.5px;width:25.4px;height:14px;background:#cde1cd;"></div><div class="a" style="left:1822.0px;top:195.5px;width:25.4px;height:14px;background:#dde9dd;"></div><div class="a" style="left:1848.4px;top:195.5px;width:25.4px;height:14px;background:#e9f1e9;"></div><div class="a" style="left:1874.8px;top:195.5px;width:25.4px;height:14px;background:#f5f8f5;"></div><div class="a" style="left:1901px;top:195.5px;width:12px;height:14px;background:#3a3a3a;"></div><div class="a" style="left:1664px;top:210.5px;width:25px;height:14px;background:#1b1b1b;"></div><div class="a" style="left:1690.0px;top:210.5px;width:25.4px;height:14px;background:#515156;"></div><div class="a" style="left:1716.4px;top:210.5px;width:25.4px;height:14px;background:#81818f;"></div><div class="a" style="left:1742.8px;top:210.5px;width:25.4px;height:14px;background:#9191b1;"></div><div class="a" style="left:1769.2px;top:210.5px;width:25.4px;height:14px;background:#9090c0;"></div><div class="a" style="left:1795.6px;top:210.5px;width:25.4px;height:14px;background:#a6a6cd;"></div><div class="a" style="left:1822.0px;top:210.5px;width:25.4px;height:14px;background:#c1c1dd;"></div><div class="a" style="left:1848.4px;top:210.5px;width:25.4px;height:14px;background:#d9d9e9;"></div><div class="a" style="left:1874.8px;top:210.5px;width:25.4px;height:14px;background:#ededf3;"></div><div class="a" style="left:1901px;top:210.5px;width:12px;height:14px;background:#3a3a3a;"></div><svg class="a" style="left:1667px;top:229px;" width="24" height="13" viewBox="0 0 24 13"><rect x="1" y="1" width="15" height="10" fill="#bbb"/><path d="M1 6 H16 M6 1 V11 M11 1 V11" stroke="#666"/><path d="M18 8 L23 8 L20.5 11Z" fill="#ddd"/></svg><div class="t" style="left:1695.0px;top:230.11px;font-size:10.5px;line-height:10.5px;color:#dcdcdc;transform:scaleX(0.973);transform-origin:0 0;">Ohne</div><svg class="a" style="left:1852px;top:228px;" width="14" height="14" viewBox="0 0 14 14"><circle cx="7" cy="7" r="6" fill="#888" stroke="#bbb"/><circle cx="7" cy="7" r="2.5" fill="#444"/></svg><svg class="a" style="left:1877px;top:228px;" width="18" height="14" viewBox="0 0 18 14"><rect x="7" y="2" width="10" height="10" fill="none" stroke="#ccc" stroke-width="1.2"/><rect x="11" y="2" width="2" height="10" fill="#ccc"/><path d="M1 9 H7 M4 6 V12" stroke="#eee" stroke-width="1.5"/></svg><svg class="a" style="left:1908px;top:236px;" width="8" height="8" viewBox="0 0 8 8"><path d="M7 1 V7 H1Z" fill="none"/><circle cx="6.5" cy="6.5" r="0.7" fill="#888"/><circle cx="3.5" cy="6.5" r="0.7" fill="#888"/><circle cx="6.5" cy="3.5" r="0.7" fill="#888"/><circle cx="0.5" cy="6.5" r="0.7" fill="#888"/><circle cx="3.5" cy="3.5" r="0.7" fill="#888"/><circle cx="6.5" cy="0.5" r="0.7" fill="#888"/></svg><div class="a" style="left:1658px;top:245px;width:262px;height:2px;background:#2b2b2b;"></div><div class="a" style="left:1658px;top:247px;width:262px;height:17px;background:#353535;"></div><div class="a" style="left:1658px;top:247px;width:55px;height:17px;background:#474747;"></div><svg class="a" style="left:1901px;top:250.5px;" width="16" height="11" viewBox="0 0 16 11"><path d="M0 4 L5 4 L2.5 7 Z" fill="#d8d8d8"/><rect x="6" y="1" width="9" height="1.4" fill="#d8d8d8"/><rect x="6" y="4.5" width="9" height="1.4" fill="#d8d8d8"/><rect x="6" y="8" width="9" height="1.4" fill="#d8d8d8"/></svg><div class="a" style="left:1713px;top:247px;width:1px;height:17px;background:#2a2a2a;"></div><svg class="a" style="left:1663px;top:250px;" width="7" height="11" viewBox="0 0 7 11"><path d="M0.8 4.5 L3.5 1.5 L6.2 4.5 M0.8 6.5 L3.5 9.5 L6.2 6.5" fill="none" stroke="#d0d0d0" stroke-width="1.1"/></svg><div class="t" style="left:1671.0px;top:251.11px;font-size:10.5px;line-height:10.5px;color:#e6e6e6;font-weight:bold;transform:scaleX(0.971);transform-origin:0 0;">Verlauf</div><svg class="a" style="left:1664px;top:272px;" width="30" height="30" viewBox="0 0 30 30"><defs><linearGradient id="vg"><stop offset="0" stop-color="#fff"/><stop offset="1" stop-color="#111"/></linearGradient></defs><rect x="0.5" y="0.5" width="29" height="29" fill="url(#vg)" stroke="#222"/></svg><svg class="a" style="left:1696.5px;top:283.5px;" width="7.0" height="7.0" viewBox="0 0 7.0 7.0"><path d="M0 1.75 L7.0 1.75 L3.5 5.25 Z" fill="#e8e8e8"/></svg><div class="t" style="left:1730.5px;top:276.11px;font-size:10.5px;line-height:10.5px;color:#d8d8d8;font-weight:bold;transform:scaleX(0.911);transform-origin:0 0;">Art:</div><div class="a" style="left:1752px;top:272px;width:161px;height:18px;background:#5a5a5a;border:1px solid #2a2a2a"></div><div class="a" style="left:1895px;top:273px;width:1px;height:16px;background:#3f3f3f;"></div><svg class="a" style="left:1900px;top:277px;" width="8" height="8" viewBox="0 0 8 8"><path d="M0 2.0 L8 2.0 L4 6.0 Z" fill="#e8e8e8"/></svg><div class="t" style="left:1713.0px;top:302.61px;font-size:10.5px;line-height:10.5px;color:#888;transform:scaleX(1.004);transform-origin:0 0;">Kontur:</div><div class="a" style="left:1752px;top:299px;width:70px;height:19px;background:#4f4f4f;border:1px solid #3f3f3f"></div><svg class="a" style="left:1756px;top:302px;" width="15" height="13" viewBox="0 0 15 13"><path d="M2 12 V2 H13 M5 12 V5 H13" fill="none" stroke="#6e6e6e" stroke-width="1.2"/></svg><svg class="a" style="left:1779px;top:302px;" width="15" height="13" viewBox="0 0 15 13"><path d="M2 12 V2 H13 M5 12 V5 H13" fill="none" stroke="#6e6e6e" stroke-width="1.2"/></svg><svg class="a" style="left:1802px;top:302px;" width="15" height="13" viewBox="0 0 15 13"><path d="M2 12 V2 H13 M5 12 V5 H13" fill="none" stroke="#6e6e6e" stroke-width="1.2"/></svg><div class="a" style="left:1675px;top:320px;width:18px;height:17px;background:#fff;border:1px solid #151515"></div><div class="a" style="left:1679px;top:324px;width:10px;height:9px;background:#474747;border:1px solid #151515"></div><svg class="a" style="left:1675px;top:320px;" width="18" height="17" viewBox="0 0 18 17"><path d="M1 16 L17 1" stroke="#c8102e" stroke-width="2"/></svg><div class="a" style="left:1664px;top:309px;width:19px;height:19px;background:#fff;border:1px solid #151515"></div><svg class="a" style="left:1671px;top:347px;" width="16" height="16" viewBox="0 0 16 16"><rect x="1" y="1" width="7" height="6" fill="none" stroke="#777"/><rect x="6" y="8" width="8" height="6" fill="#777"/><path d="M10 2 L13 5 L10 5Z" fill="#777"/></svg><svg class="a" style="left:1732px;top:327px;" width="16" height="14" viewBox="0 0 16 14"><path d="M1 12 H14 L9 3Z" fill="none" stroke="#777"/></svg><div class="a" style="left:1753px;top:326px;width:67px;height:17px;background:#5e5e5e;border:1px solid #3e3e3e"></div><div class="a" style="left:1803px;top:327px;width:1px;height:15px;background:#4a4a4a;"></div><svg class="a" style="left:1807.5px;top:330.5px;" width="7.0" height="7.0" viewBox="0 0 7.0 7.0"><path d="M0 1.75 L7.0 1.75 L3.5 5.25 Z" fill="#777"/></svg><svg class="a" style="left:1730px;top:352px;" width="18" height="18" viewBox="0 0 18 18"><rect x="4" y="8" width="11" height="6" rx="2" fill="none" stroke="#777"/><path d="M2 2 V17 M1 4 L2 2 L3 4" stroke="#777" fill="none"/></svg><div class="a" style="left:1753px;top:352px;width:67px;height:17px;background:#5e5e5e;border:1px solid #3e3e3e"></div><div class="a" style="left:1803px;top:353px;width:1px;height:15px;background:#4a4a4a;"></div><svg class="a" style="left:1807.5px;top:356.5px;" width="7.0" height="7.0" viewBox="0 0 7.0 7.0"><path d="M0 1.75 L7.0 1.75 L3.5 5.25 Z" fill="#777"/></svg><svg class="a" style="left:1668px;top:384px;" width="217" height="19" viewBox="0 0 217 19"><defs><linearGradient id="vg2"><stop offset="0" stop-color="#fff"/><stop offset="0.5" stop-color="#999"/><stop offset="1" stop-color="#000"/></linearGradient></defs><rect x="0.5" y="0.5" width="216" height="18" fill="url(#vg2)" stroke="#2a2a2a"/></svg><svg class="a" style="left:1895px;top:387px;" width="14" height="16" viewBox="0 0 14 16"><path d="M2 3 H12 M5 3 V1.5 H9 V3 M3 4 L4 15 H10 L11 4" fill="none" stroke="#666" stroke-width="1.1"/></svg><div class="t" style="left:1702.0px;top:434.11px;font-size:10.5px;line-height:10.5px;color:#8a8a8a;transform:scaleX(0.931);transform-origin:0 0;">Deckkraft:</div><div class="a" style="left:1753px;top:431px;width:67px;height:17px;background:#5e5e5e;border:1px solid #3e3e3e"></div><div class="a" style="left:1803px;top:432px;width:1px;height:15px;background:#4a4a4a;"></div><svg class="a" style="left:1807.5px;top:435.5px;" width="7.0" height="7.0" viewBox="0 0 7.0 7.0"><path d="M0 1.75 L7.0 1.75 L3.5 5.25 Z" fill="#777"/></svg><div class="t" style="left:1709.0px;top:460.11px;font-size:10.5px;line-height:10.5px;color:#8a8a8a;transform:scaleX(0.919);transform-origin:0 0;">Position:</div><div class="a" style="left:1753px;top:457px;width:67px;height:17px;background:#5e5e5e;border:1px solid #3e3e3e"></div><div class="a" style="left:1803px;top:458px;width:1px;height:15px;background:#4a4a4a;"></div><svg class="a" style="left:1807.5px;top:461.5px;" width="7.0" height="7.0" viewBox="0 0 7.0 7.0"><path d="M0 1.75 L7.0 1.75 L3.5 5.25 Z" fill="#777"/></svg><svg class="a" style="left:1908px;top:472px;" width="8" height="8" viewBox="0 0 8 8"><path d="M7 1 V7 H1Z" fill="none"/><circle cx="6.5" cy="6.5" r="0.7" fill="#888"/><circle cx="3.5" cy="6.5" r="0.7" fill="#888"/><circle cx="6.5" cy="3.5" r="0.7" fill="#888"/><circle cx="0.5" cy="6.5" r="0.7" fill="#888"/><circle cx="3.5" cy="3.5" r="0.7" fill="#888"/><circle cx="6.5" cy="0.5" r="0.7" fill="#888"/></svg><div class="a" style="left:1658px;top:481px;width:262px;height:3px;background:#2b2b2b;"></div><div class="a" style="left:1658px;top:484px;width:262px;height:17px;background:#353535;"></div><div class="a" style="left:1658px;top:484px;width:63px;height:17px;background:#474747;"></div><svg class="a" style="left:1901px;top:487.5px;" width="16" height="11" viewBox="0 0 16 11"><path d="M0 4 L5 4 L2.5 7 Z" fill="#d8d8d8"/><rect x="6" y="1" width="9" height="1.4" fill="#d8d8d8"/><rect x="6" y="4.5" width="9" height="1.4" fill="#d8d8d8"/><rect x="6" y="8" width="9" height="1.4" fill="#d8d8d8"/></svg><div class="a" style="left:1721px;top:484px;width:1px;height:17px;background:#2a2a2a;"></div><div class="t" style="left:1665.0px;top:487.11px;font-size:10.5px;line-height:10.5px;color:#e6e6e6;font-weight:bold;transform:scaleX(0.915);transform-origin:0 0;">Farbfelder</div><div class="a" style="left:1673px;top:517px;width:19px;height:19px;background:#fff;border:1px solid #151515"></div><div class="a" style="left:1677px;top:521px;width:11px;height:11px;background:#474747;border:1px solid #151515"></div><svg class="a" style="left:1673px;top:517px;" width="19" height="19" viewBox="0 0 19 19"><path d="M1 18 L18 1" stroke="#c8102e" stroke-width="2"/></svg><div class="a" style="left:1664px;top:508px;width:19px;height:19px;background:#fff;border:1px solid #151515"></div><div class="a" style="left:1862px;top:508px;width:50px;height:22px;background:#3a3a3a;border:1px solid #2a2a2a"></div><div class="a" style="left:1863px;top:509px;width:24px;height:20px;background:#5a5a5a;"></div><svg class="a" style="left:1866px;top:511px;" width="18" height="16" viewBox="0 0 18 16"><rect x="2" y="2" width="14" height="2" fill="#e8e8e8"/><rect x="2" y="6" width="14" height="2" fill="#e8e8e8"/><rect x="2" y="10" width="14" height="2" fill="#e8e8e8"/><rect x="2" y="14" width="14" height="1.5" fill="#e8e8e8"/></svg><svg class="a" style="left:1890px;top:511px;" width="18" height="16" viewBox="0 0 18 16"><rect x="2" y="1.5" width="4" height="4" fill="#e8e8e8"/><rect x="7" y="1.5" width="4" height="4" fill="#e8e8e8"/><rect x="12" y="1.5" width="4" height="4" fill="#e8e8e8"/><rect x="2" y="6.5" width="4" height="4" fill="#e8e8e8"/><rect x="7" y="6.5" width="4" height="4" fill="#e8e8e8"/><rect x="12" y="6.5" width="4" height="4" fill="#e8e8e8"/><rect x="2" y="11.5" width="4" height="4" fill="#e8e8e8"/><rect x="7" y="11.5" width="4" height="4" fill="#e8e8e8"/><rect x="12" y="11.5" width="4" height="4" fill="#e8e8e8"/></svg><div class="a" style="left:1663px;top:542px;width:251px;height:127px;background:#474747;border:1px solid #2d2d2d"></div><div class="a" style="left:1901px;top:543px;width:12px;height:125px;background:#3b3b3b;"></div><svg class="a" style="left:1902px;top:546px;" width="11" height="8" viewBox="0 0 11 8"><path d="M1 7 L10 7 L5.5 1.5Z" fill="#9a9a9a"/></svg><svg class="a" style="left:1902px;top:655px;" width="11" height="8" viewBox="0 0 11 8"><path d="M1 1 L10 1 L5.5 6.5Z" fill="#9a9a9a"/></svg><svg class="a" style="left:1664px;top:543px;" width="225" height="72" viewBox="0 0 225 72"><defs><linearGradient id="s_lg"><stop offset="0" stop-color="#fff"/><stop offset="1" stop-color="#111"/></linearGradient><radialGradient id="s_sp"><stop offset="0" stop-color="#fff"/><stop offset="0.7" stop-color="#999"/><stop offset="1" stop-color="#000"/></radialGradient><linearGradient id="s_og"><stop offset="0" stop-color="#e08a30"/><stop offset="0.5" stop-color="#f5e0a0"/><stop offset="1" stop-color="#8a6a80"/></linearGradient><radialGradient id="s_rb"><stop offset="0" stop-color="#fff0b0"/><stop offset="0.5" stop-color="#c07030"/><stop offset="1" stop-color="#3a1a0a"/></radialGradient></defs><rect x="0.0" y="0.0" width="13" height="13" fill="#fff"/><path d="M0.5 12.5 L12.5 0.5" stroke="#e2001a" stroke-width="1.6"/><rect x="13.95" y="0.0" width="13" height="13" fill="#fff"/><circle cx="20.45" cy="6.5" r="4.5" fill="none" stroke="#222" stroke-width="0.9"/><path d="M20.45 0.0 V13.0 M13.95 6.5 H26.95" stroke="#222" stroke-width="0.9"/><rect x="27.9" y="0.0" width="13" height="13" fill="#fff"/><rect x="29.4" y="1.5" width="10" height="10" fill="#fff" stroke="#111" stroke-width="1"/><rect x="41.849999999999994" y="0.0" width="13" height="13" fill="#000000"/><rect x="55.8" y="0.0" width="13" height="13" fill="#e2001a"/><rect x="69.75" y="0.0" width="13" height="13" fill="#ffed00"/><rect x="83.69999999999999" y="0.0" width="13" height="13" fill="#009640"/><rect x="97.64999999999999" y="0.0" width="13" height="13" fill="#009fe3"/><rect x="111.6" y="0.0" width="13" height="13" fill="#312783"/><rect x="125.55" y="0.0" width="13" height="13" fill="#e6007e"/><rect x="139.5" y="0.0" width="13" height="13" fill="#be1622"/><rect x="153.45" y="0.0" width="13" height="13" fill="#e5332a"/><rect x="167.39999999999998" y="0.0" width="13" height="13" fill="#e6562b"/><rect x="181.35" y="0.0" width="13" height="13" fill="#f39200"/><rect x="195.29999999999998" y="0.0" width="13" height="13" fill="#f0b030"/><rect x="209.25" y="0.0" width="13" height="13" fill="#f8e600"/><rect x="0.0" y="14.05" width="13" height="13" fill="#dedc00"/><rect x="13.95" y="14.05" width="13" height="13" fill="#95c11f"/><rect x="27.9" y="14.05" width="13" height="13" fill="#3aaa35"/><rect x="41.849999999999994" y="14.05" width="13" height="13" fill="#319733"/><rect x="55.8" y="14.05" width="13" height="13" fill="#20712f"/><rect x="69.75" y="14.05" width="13" height="13" fill="#5db36a"/><rect x="83.69999999999999" y="14.05" width="13" height="13" fill="#2aa198"/><rect x="97.64999999999999" y="14.05" width="13" height="13" fill="#5aade0"/><rect x="111.6" y="14.05" width="13" height="13" fill="#347ac0"/><rect x="125.55" y="14.05" width="13" height="13" fill="#253f98"/><rect x="139.5" y="14.05" width="13" height="13" fill="#23286e"/><rect x="153.45" y="14.05" width="13" height="13" fill="#5f2a8e"/><rect x="167.39999999999998" y="14.05" width="13" height="13" fill="#8f1385"/><rect x="181.35" y="14.05" width="13" height="13" fill="#a01c60"/><rect x="195.29999999999998" y="14.05" width="13" height="13" fill="#d4006e"/><rect x="209.25" y="14.05" width="13" height="13" fill="#e3197f"/><rect x="0.0" y="28.1" width="13" height="13" fill="#cbbd9f"/><rect x="13.95" y="28.1" width="13" height="13" fill="#9d8c7d"/><rect x="27.9" y="28.1" width="13" height="13" fill="#7a6a5a"/><rect x="41.849999999999994" y="28.1" width="13" height="13" fill="#615247"/><rect x="55.8" y="28.1" width="13" height="13" fill="#c8a06a"/><rect x="69.75" y="28.1" width="13" height="13" fill="#b68653"/><rect x="83.69999999999999" y="28.1" width="13" height="13" fill="#a2693a"/><rect x="97.64999999999999" y="28.1" width="13" height="13" fill="#955a28"/><rect x="111.6" y="28.1" width="13" height="13" fill="#744b1a"/><rect x="125.55" y="28.1" width="13" height="13" fill="#553826"/><rect x="139.5" y="28.1" width="13" height="13" fill="url(#s_lg)"/><rect x="153.45" y="28.1" width="13" height="13" fill="#000000"/><rect x="167.39999999999998" y="28.1" width="13" height="13" fill="#000"/><circle cx="173.89999999999998" cy="34.6" r="5.5" fill="url(#s_sp)"/><rect x="181.35" y="28.1" width="13" height="13" fill="#0a0008"/><rect x="195.29999999999998" y="28.1" width="13" height="13" fill="url(#s_og)"/><rect x="209.25" y="28.1" width="13" height="13" fill="url(#s_rb)"/><rect x="0.0" y="42.150000000000006" width="13" height="13" fill="#d8301a"/><path d="M2.0 46.150000000000006 h6 M4.0 50.150000000000006 h7 M1.0 53.150000000000006 h5" stroke="#f0a030" stroke-width="1.2"/><rect x="13.95" y="42.150000000000006" width="13" height="13" fill="#e8860e"/><path d="M17.95 55.150000000000006 L26.95 46.150000000000006 V55.150000000000006Z" fill="#fff"/><path d="M17.95 55.150000000000006 L26.95 46.150000000000006" stroke="#000" stroke-width="0.9"/><circle cx="23.95" cy="52.650000000000006" r="1" fill="#000"/><rect x="27.9" y="42.150000000000006" width="13" height="13" fill="#b0b0b0"/><path d="M31.9 55.150000000000006 L40.9 46.150000000000006 V55.150000000000006Z" fill="#fff"/><path d="M31.9 55.150000000000006 L40.9 46.150000000000006" stroke="#000" stroke-width="0.9"/><circle cx="37.9" cy="52.650000000000006" r="1" fill="#000"/><rect x="41.849999999999994" y="42.150000000000006" width="13" height="13" fill="#3a3a3a"/><path d="M45.849999999999994 55.150000000000006 L54.849999999999994 46.150000000000006 V55.150000000000006Z" fill="#fff"/><path d="M45.849999999999994 55.150000000000006 L54.849999999999994 46.150000000000006" stroke="#000" stroke-width="0.9"/><circle cx="51.849999999999994" cy="52.650000000000006" r="1" fill="#000"/><rect x="55.8" y="42.150000000000006" width="13" height="13" fill="#b0b0b0"/><path d="M59.8 55.150000000000006 L68.8 46.150000000000006 V55.150000000000006Z" fill="#fff"/><path d="M59.8 55.150000000000006 L68.8 46.150000000000006" stroke="#000" stroke-width="0.9"/><circle cx="65.8" cy="52.650000000000006" r="1" fill="#000"/><rect x="69.75" y="42.150000000000006" width="13" height="13" fill="#000000"/><rect x="83.69999999999999" y="42.150000000000006" width="13" height="13" fill="#3d3d3d"/><rect x="97.64999999999999" y="42.150000000000006" width="13" height="13" fill="#5e5e5e"/><rect x="111.6" y="42.150000000000006" width="13" height="13" fill="#727272"/><rect x="125.55" y="42.150000000000006" width="13" height="13" fill="#898989"/><rect x="139.5" y="42.150000000000006" width="13" height="13" fill="#9d9d9d"/><rect x="153.45" y="42.150000000000006" width="13" height="13" fill="#b2b2b2"/><rect x="167.39999999999998" y="42.150000000000006" width="13" height="13" fill="#c5c5c5"/><rect x="181.35" y="42.150000000000006" width="13" height="13" fill="#d9d9d9"/><rect x="195.29999999999998" y="42.150000000000006" width="13" height="13" fill="#ececec"/><rect x="209.25" y="42.150000000000006" width="13" height="13" fill="#f5f5f5"/><rect x="0.0" y="56.2" width="13" height="13" fill="#e2001a"/><rect x="13.95" y="56.2" width="13" height="13" fill="#e5641f"/><rect x="27.9" y="56.2" width="13" height="13" fill="#ffdd00"/><rect x="41.849999999999994" y="56.2" width="13" height="13" fill="#2fa032"/><rect x="55.8" y="56.2" width="13" height="13" fill="#213a95"/><rect x="69.75" y="56.2" width="13" height="13" fill="#7c3394"/></svg><svg class="a" style="left:1665px;top:672px;" width="20" height="14" viewBox="0 0 20 14"><path d="M2 2 V12 M5 2 V12 M8 2 L12 12" stroke="#cfcfcf" stroke-width="1.3"/><path d="M13 9 L17 9 L15 11.5Z" fill="#cfcfcf"/></svg><svg class="a" style="left:1693px;top:671px;" width="15" height="15" viewBox="0 0 15 15"><circle cx="4" cy="7.5" r="2" fill="none" stroke="#cfcfcf"/><circle cx="11" cy="3.5" r="2" fill="none" stroke="#cfcfcf"/><circle cx="11" cy="11.5" r="2" fill="none" stroke="#cfcfcf"/><path d="M6 6.5 L9 4.5 M6 8.5 L9 10.5" stroke="#cfcfcf"/></svg><svg class="a" style="left:1771px;top:671px;" width="18" height="15" viewBox="0 0 18 15"><rect x="1" y="1" width="10" height="10" fill="none" stroke="#cfcfcf"/><path d="M1 4.5 H11 M1 8 H11 M4.5 1 V11 M8 1 V11" stroke="#cfcfcf"/><path d="M12 10 L17 10 L14.5 13Z" fill="#cfcfcf"/></svg><svg class="a" style="left:1799px;top:671px;" width="15" height="15" viewBox="0 0 15 15"><rect x="1.5" y="1.5" width="12" height="12" fill="none" stroke="#cfcfcf"/><path d="M4 5 H11 M4 8 H11 M4 11 H11" stroke="#cfcfcf"/></svg><svg class="a" style="left:1826px;top:671px;" width="16" height="15" viewBox="0 0 16 15"><path d="M1 3 H6 L7.5 5 H15 V13 H1Z" fill="#cfcfcf"/></svg><svg class="a" style="left:1852px;top:671px;" width="15" height="15" viewBox="0 0 15 15"><path d="M2 4 H13 V14 H2Z" fill="none" stroke="#cfcfcf"/><path d="M7 8 H13 V14 H7Z" fill="#cfcfcf"/></svg><svg class="a" style="left:1878px;top:671px;" width="15" height="15" viewBox="0 0 15 15"><path d="M2 3.5 H13 M5 3.5 V1.5 H10 V3.5 M3 5 L4 14 H11 L12 5 M6 6 V12 M9 6 V12" fill="none" stroke="#cfcfcf" stroke-width="1.1"/></svg><svg class="a" style="left:1908px;top:680px;" width="8" height="8" viewBox="0 0 8 8"><path d="M7 1 V7 H1Z" fill="none"/><circle cx="6.5" cy="6.5" r="0.7" fill="#888"/><circle cx="3.5" cy="6.5" r="0.7" fill="#888"/><circle cx="6.5" cy="3.5" r="0.7" fill="#888"/><circle cx="0.5" cy="6.5" r="0.7" fill="#888"/><circle cx="3.5" cy="3.5" r="0.7" fill="#888"/><circle cx="6.5" cy="0.5" r="0.7" fill="#888"/></svg><div class="a" style="left:1658px;top:689px;width:262px;height:3px;background:#2b2b2b;"></div><div class="a" style="left:1658px;top:692px;width:262px;height:16px;background:#353535;"></div><div class="a" style="left:1658px;top:692px;width:46px;height:16px;background:#474747;"></div><svg class="a" style="left:1901px;top:695.0px;" width="16" height="11" viewBox="0 0 16 11"><path d="M0 4 L5 4 L2.5 7 Z" fill="#d8d8d8"/><rect x="6" y="1" width="9" height="1.4" fill="#d8d8d8"/><rect x="6" y="4.5" width="9" height="1.4" fill="#d8d8d8"/><rect x="6" y="8" width="9" height="1.4" fill="#d8d8d8"/></svg><div class="a" style="left:1704px;top:692px;width:1px;height:16px;background:#2a2a2a;"></div><svg class="a" style="left:1663px;top:695px;" width="7" height="11" viewBox="0 0 7 11"><path d="M0.8 4.5 L3.5 1.5 L6.2 4.5 M0.8 6.5 L3.5 9.5 L6.2 6.5" fill="none" stroke="#d0d0d0" stroke-width="1.1"/></svg><div class="t" style="left:1671.0px;top:694.11px;font-size:10.5px;line-height:10.5px;color:#e6e6e6;font-weight:bold;transform:scaleX(0.909);transform-origin:0 0;">Farbe</div><svg class="a" style="left:1664px;top:715px;" width="10" height="10" viewBox="0 0 10 10"><rect x="0.5" y="0.5" width="6" height="6" fill="#474747" stroke="#ddd"/><rect x="3.5" y="3.5" width="6" height="6" fill="#222" stroke="#ddd"/></svg><svg class="a" style="left:1683px;top:714px;" width="11" height="11" viewBox="0 0 11 11"><path d="M2 4 Q6 1 8 6 M6 5 L8 7 L10 4.5" fill="none" stroke="#ccc" stroke-width="1.1"/><path d="M1 1.5 L4 1.5 L1 4.5Z" fill="#ccc"/></svg><div class="a" style="left:1674px;top:743px;width:18px;height:18px;background:#fff;border:1px solid #151515"></div><div class="a" style="left:1678px;top:747px;width:10px;height:10px;background:#474747;border:1px solid #151515"></div><svg class="a" style="left:1674px;top:743px;" width="18" height="18" viewBox="0 0 18 18"><path d="M1 17 L17 1" stroke="#c8102e" stroke-width="2"/></svg><div class="a" style="left:1664px;top:733px;width:19px;height:19px;background:#fff;border:1px solid #151515"></div><div class="t" style="left:1710.0px;top:720.91px;font-size:10.5px;line-height:10.5px;color:#c8c8c8;transform:scaleX(1.055);transform-origin:0 0;">C</div><svg class="a" style="left:1728px;top:722.8px;" width="104" height="5" viewBox="0 0 104 5"><defs><linearGradient id="cm0"><stop offset="0" stop-color="#fff"/><stop offset="1" stop-color="#00a0e3"/></linearGradient></defs><rect x="0" y="0" width="104" height="5" fill="url(#cm0)"/></svg><svg class="a" style="left:1724px;top:727.3px;" width="9" height="7" viewBox="0 0 9 7"><path d="M4.5 0.5 L8.5 6.5 H0.5Z" fill="#cfcfcf" stroke="#333" stroke-width="0.6"/></svg><div class="a" style="left:1837px;top:717.3px;width:34px;height:18px;background:#a8a8a8;border:1px solid #262626"></div><div class="t" style="left:1842.0px;top:721.30px;font-size:10.5px;line-height:10.5px;color:#111;">0</div><div class="t" style="left:1873.0px;top:720.91px;font-size:10.5px;line-height:10.5px;color:#d0d0d0;transform:scaleX(0.857);transform-origin:0 0;">%</div><div class="t" style="left:1710.0px;top:745.91px;font-size:10.5px;line-height:10.5px;color:#c8c8c8;transform:scaleX(0.915);transform-origin:0 0;">M</div><svg class="a" style="left:1728px;top:747.8px;" width="104" height="5" viewBox="0 0 104 5"><defs><linearGradient id="cm1"><stop offset="0" stop-color="#fff"/><stop offset="1" stop-color="#e5007d"/></linearGradient></defs><rect x="0" y="0" width="104" height="5" fill="url(#cm1)"/></svg><svg class="a" style="left:1724px;top:752.3px;" width="9" height="7" viewBox="0 0 9 7"><path d="M4.5 0.5 L8.5 6.5 H0.5Z" fill="#cfcfcf" stroke="#333" stroke-width="0.6"/></svg><div class="a" style="left:1837px;top:742.3px;width:34px;height:18px;background:#a8a8a8;border:1px solid #262626"></div><div class="t" style="left:1842.0px;top:746.30px;font-size:10.5px;line-height:10.5px;color:#111;">0</div><div class="t" style="left:1873.0px;top:745.91px;font-size:10.5px;line-height:10.5px;color:#d0d0d0;transform:scaleX(0.857);transform-origin:0 0;">%</div><div class="t" style="left:1710.0px;top:770.91px;font-size:10.5px;line-height:10.5px;color:#c8c8c8;transform:scaleX(1.142);transform-origin:0 0;">Y</div><svg class="a" style="left:1728px;top:772.8px;" width="104" height="5" viewBox="0 0 104 5"><defs><linearGradient id="cm2"><stop offset="0" stop-color="#fff"/><stop offset="1" stop-color="#ffe800"/></linearGradient></defs><rect x="0" y="0" width="104" height="5" fill="url(#cm2)"/></svg><svg class="a" style="left:1724px;top:777.3px;" width="9" height="7" viewBox="0 0 9 7"><path d="M4.5 0.5 L8.5 6.5 H0.5Z" fill="#cfcfcf" stroke="#333" stroke-width="0.6"/></svg><div class="a" style="left:1837px;top:767.3px;width:34px;height:18px;background:#a8a8a8;border:1px solid #262626"></div><div class="t" style="left:1842.0px;top:771.30px;font-size:10.5px;line-height:10.5px;color:#111;">0</div><div class="t" style="left:1873.0px;top:770.91px;font-size:10.5px;line-height:10.5px;color:#d0d0d0;transform:scaleX(0.857);transform-origin:0 0;">%</div><div class="t" style="left:1710.0px;top:795.91px;font-size:10.5px;line-height:10.5px;color:#c8c8c8;transform:scaleX(1.142);transform-origin:0 0;">K</div><svg class="a" style="left:1728px;top:797.8px;" width="104" height="5" viewBox="0 0 104 5"><defs><linearGradient id="cm3"><stop offset="0" stop-color="#fff"/><stop offset="1" stop-color="#111111"/></linearGradient></defs><rect x="0" y="0" width="104" height="5" fill="url(#cm3)"/></svg><svg class="a" style="left:1724px;top:802.3px;" width="9" height="7" viewBox="0 0 9 7"><path d="M4.5 0.5 L8.5 6.5 H0.5Z" fill="#cfcfcf" stroke="#333" stroke-width="0.6"/></svg><div class="a" style="left:1837px;top:792.3px;width:34px;height:18px;background:#a8a8a8;border:1px solid #262626"></div><div class="t" style="left:1842.0px;top:796.30px;font-size:10.5px;line-height:10.5px;color:#111;">0</div><div class="t" style="left:1873.0px;top:795.91px;font-size:10.5px;line-height:10.5px;color:#d0d0d0;transform:scaleX(0.857);transform-origin:0 0;">%</div><svg class="a" style="left:1664px;top:822px;" width="39" height="14" viewBox="0 0 39 14"><rect x="0.5" y="0.5" width="13" height="13" fill="#fff" stroke="#2a2a2a"/><path d="M1 13 L13 1" stroke="#c8102e" stroke-width="1.8"/><rect x="13" y="0.5" width="13" height="13" fill="#000"/><rect x="26" y="0.5" width="12.5" height="13" fill="#fff" stroke="#2a2a2a"/></svg><svg class="a" style="left:1664px;top:846px;" width="238" height="22" viewBox="0 0 238 22"><defs><linearGradient id="spx" x1="0" x2="1"><stop offset="0" stop-color="#e0302a"/><stop offset="0.18" stop-color="#f5e62a"/><stop offset="0.38" stop-color="#3aaa35"/><stop offset="0.55" stop-color="#a0d8e8"/><stop offset="0.7" stop-color="#2a3a98"/><stop offset="0.88" stop-color="#a0308a"/><stop offset="1" stop-color="#e0206a"/></linearGradient><linearGradient id="spy" x1="0" x2="0" y1="0" y2="1"><stop offset="0" stop-color="#fff" stop-opacity="0.8"/><stop offset="0.35" stop-color="#fff" stop-opacity="0"/><stop offset="0.6" stop-color="#000" stop-opacity="0"/><stop offset="1" stop-color="#000" stop-opacity="0.95"/></linearGradient></defs><rect x="0" y="0" width="238" height="22" fill="url(#spx)"/><rect x="0" y="0" width="238" height="22" fill="url(#spy)"/></svg><svg class="a" style="left:1908px;top:866px;" width="8" height="8" viewBox="0 0 8 8"><path d="M7 1 V7 H1Z" fill="none"/><circle cx="6.5" cy="6.5" r="0.7" fill="#888"/><circle cx="3.5" cy="6.5" r="0.7" fill="#888"/><circle cx="6.5" cy="3.5" r="0.7" fill="#888"/><circle cx="0.5" cy="6.5" r="0.7" fill="#888"/><circle cx="3.5" cy="3.5" r="0.7" fill="#888"/><circle cx="6.5" cy="0.5" r="0.7" fill="#888"/></svg><div class="a" style="left:1658px;top:875px;width:262px;height:4px;background:#2b2b2b;"></div><div class="a" style="left:1658px;top:879px;width:262px;height:16px;background:#353535;"></div><div class="a" style="left:1658px;top:879px;width:56px;height:16px;background:#474747;"></div><svg class="a" style="left:1901px;top:882.0px;" width="16" height="11" viewBox="0 0 16 11"><path d="M0 4 L5 4 L2.5 7 Z" fill="#d8d8d8"/><rect x="6" y="1" width="9" height="1.4" fill="#d8d8d8"/><rect x="6" y="4.5" width="9" height="1.4" fill="#d8d8d8"/><rect x="6" y="8" width="9" height="1.4" fill="#d8d8d8"/></svg><div class="a" style="left:1714px;top:879px;width:1px;height:16px;background:#2a2a2a;"></div><div class="t" style="left:1665.5px;top:881.11px;font-size:10.5px;line-height:10.5px;color:#e6e6e6;font-weight:bold;transform:scaleX(0.857);transform-origin:0 0;">Aussehen</div><div class="a" style="left:1663px;top:901px;width:251px;height:98px;background:#474747;border:1px solid #2f2f2f"></div><div class="a" style="left:1664px;top:926px;width:249px;height:1px;background:#333;"></div><div class="a" style="left:1664px;top:951px;width:249px;height:1px;background:#333;"></div><div class="a" style="left:1664px;top:976px;width:249px;height:1px;background:#333;"></div><div class="a" style="left:1689px;top:952px;width:1px;height:24px;background:#333;"></div><div class="a" style="left:1666.5px;top:905px;width:19px;height:18px;background:#fff;"></div><div class="t" style="left:1711.0px;top:908.11px;font-size:10.5px;line-height:10.5px;color:#e8e8e8;font-weight:bold;transform:scaleX(0.962);transform-origin:0 0;">Schrift</div><div class="t" style="left:1711.0px;top:933.11px;font-size:10.5px;line-height:10.5px;color:#dcdcdc;transform:scaleX(0.937);transform-origin:0 0;">Zeichen</div><svg class="a" style="left:1668px;top:958px;" width="15" height="10" viewBox="0 0 15 10"><path d="M1 5 Q7.5 -1 14 5 Q7.5 11 1 5Z" fill="none" stroke="#666"/><circle cx="7.5" cy="5" r="2" fill="#666"/></svg><div class="t" style="left:1711.5px;top:958.11px;font-size:10.5px;line-height:10.5px;color:#e49a4a;transform:scaleX(0.952);transform-origin:0 0;">Deckkraft:</div><svg class="a" style="left:1711.5px;top:969px;" width="46" height="2" viewBox="0 0 46 2"><line x1="0" y1="1" x2="46" y2="1" stroke="#d0883a" stroke-width="1" stroke-dasharray="1 1"/></svg><div class="t" style="left:1788.0px;top:958.11px;font-size:10.5px;line-height:10.5px;color:#dcdcdc;transform:scaleX(0.939);transform-origin:0 0;">Standard</div><svg class="a" style="left:1668px;top:1001px;" width="14" height="13" viewBox="0 0 14 13"><rect x="1.5" y="1.5" width="10" height="10" fill="none" stroke="#ddd" stroke-width="1.3"/></svg><svg class="a" style="left:1694px;top:1001px;" width="14" height="13" viewBox="0 0 14 13"><rect x="1.5" y="1.5" width="10" height="10" fill="none" stroke="#ddd" stroke-width="1.3"/><rect x="4" y="4" width="5" height="5" fill="#ddd"/></svg><div class="t" style="left:1719.0px;top:1002.84px;font-size:12px;line-height:12px;color:#dcdcdc;font-style:italic;font-family:'Liberation Serif',serif;">fx</div><svg class="a" style="left:1732px;top:1008px;" width="7" height="5" viewBox="0 0 7 5"><path d="M0 0 L6 0 L3 4Z" fill="#ddd"/></svg><svg class="a" style="left:1826px;top:1001px;" width="14" height="14" viewBox="0 0 14 14"><circle cx="7" cy="7" r="5.5" fill="none" stroke="#666" stroke-width="1.3"/><path d="M3 3 L11 11" stroke="#666" stroke-width="1.3"/></svg><svg class="a" style="left:1852px;top:1001px;" width="14" height="14" viewBox="0 0 14 14"><path d="M2 4 H12 V13 H2Z" fill="none" stroke="#666"/><path d="M6 8 H12 V13 H6Z" fill="#666"/></svg><svg class="a" style="left:1878px;top:1001px;" width="14" height="14" viewBox="0 0 14 14"><path d="M2 3.5 H12 M5 3.5 V1.5 H9 V3.5 M3 5 L4 13 H10 L11 5" fill="none" stroke="#666" stroke-width="1.1"/></svg><div class="a" style="left:1658px;top:1018px;width:262px;height:4px;background:#2b2b2b;"></div><div class="a" style="left:1658px;top:1022px;width:262px;height:17px;background:#353535;"></div><div class="a" style="left:1658px;top:1022px;width:56px;height:17px;background:#474747;"></div><svg class="a" style="left:1901px;top:1025.5px;" width="16" height="11" viewBox="0 0 16 11"><path d="M0 4 L5 4 L2.5 7 Z" fill="#d8d8d8"/><rect x="6" y="1" width="9" height="1.4" fill="#d8d8d8"/><rect x="6" y="4.5" width="9" height="1.4" fill="#d8d8d8"/><rect x="6" y="8" width="9" height="1.4" fill="#d8d8d8"/></svg><div class="a" style="left:1714px;top:1022px;width:1px;height:17px;background:#2a2a2a;"></div><div class="a" style="left:1758px;top:1022px;width:1px;height:17px;background:#2a2a2a;"></div><div class="a" style="left:1822px;top:1022px;width:1px;height:17px;background:#2a2a2a;"></div><svg class="a" style="left:1663px;top:1026px;" width="7" height="11" viewBox="0 0 7 11"><path d="M0.8 4.5 L3.5 1.5 L6.2 4.5 M0.8 6.5 L3.5 9.5 L6.2 6.5" fill="none" stroke="#d0d0d0" stroke-width="1.1"/></svg><div class="t" style="left:1671.0px;top:1024.11px;font-size:10.5px;line-height:10.5px;color:#e6e6e6;font-weight:bold;transform:scaleX(0.907);transform-origin:0 0;">Zeichen</div><div class="t" style="left:1721.5px;top:1024.11px;font-size:10.5px;line-height:10.5px;color:#9a9a9a;font-weight:bold;transform:scaleX(0.871);transform-origin:0 0;">Absatz</div><div class="t" style="left:1767.0px;top:1024.11px;font-size:10.5px;line-height:10.5px;color:#9a9a9a;font-weight:bold;transform:scaleX(0.930);transform-origin:0 0;">OpenType</div></body></html>
